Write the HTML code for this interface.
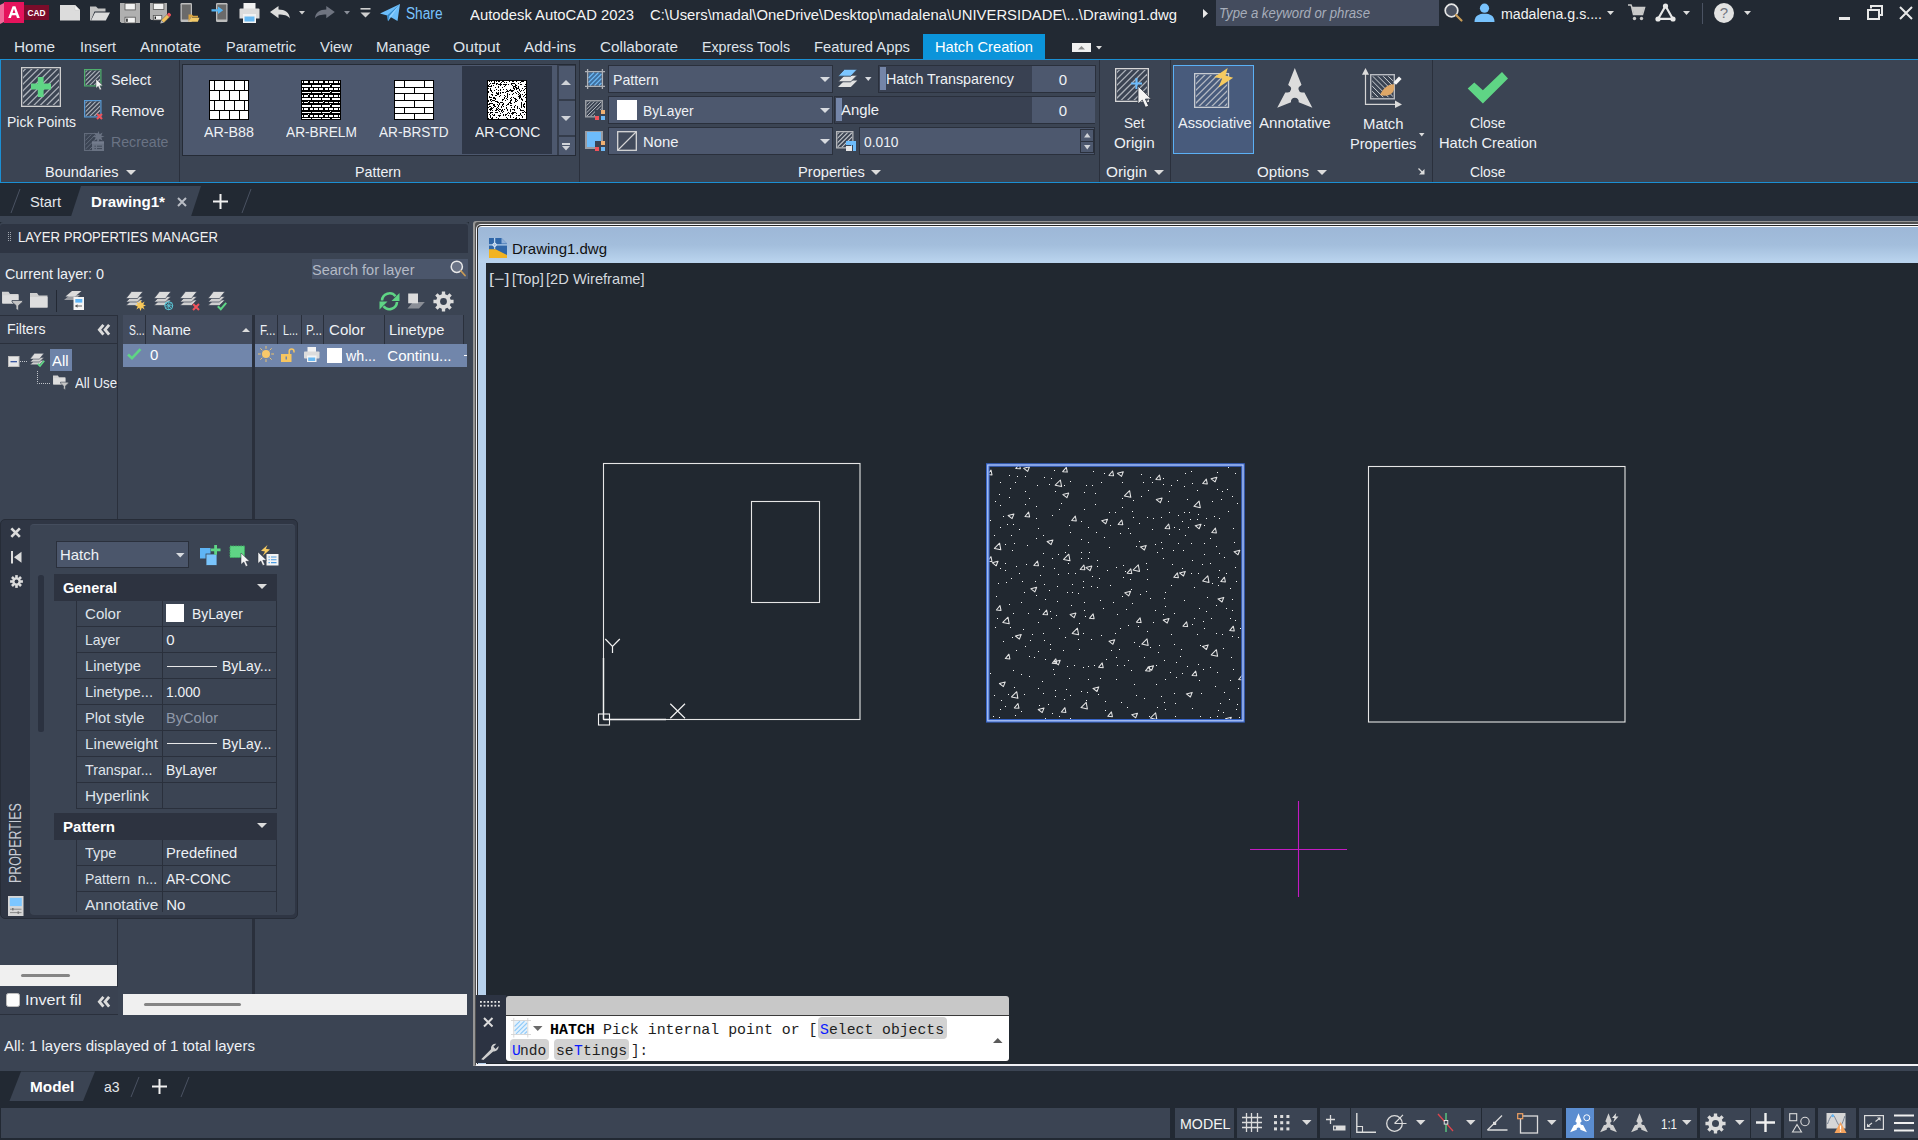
<!DOCTYPE html>
<html><head><meta charset="utf-8"><title>AutoCAD</title>
<style>
*{box-sizing:border-box;margin:0;padding:0}
html,body{width:1918px;height:1140px;overflow:hidden;background:#222933}
body{font-family:"Liberation Sans",sans-serif;font-size:15px;color:#f0f0f0;position:relative}
.a{position:absolute}
.t{position:absolute;white-space:pre;color:#f2f2f2}
svg{position:absolute;overflow:visible}
</style></head><body>
<!-- s_title -->
<svg style="left:0px;top:1px;" width="50" height="23" viewBox="0 0 50 23">
<path d="M0 4L4 2V21L0 23Z" fill="#f06a9a"/>
<rect x="4" y="1" width="20" height="21" fill="#e5135c"/>
<rect x="24" y="4" width="25" height="15" fill="#7a0c2a"/>
<path d="M8.2 17L12.6 5.2H15.4L19.8 17H17L16.1 14.3H11.8L10.9 17ZM12.5 12.1H15.4L14 7.7Z" fill="#fff"/>
<text x="27.5" y="15.2" font-family="Liberation Sans" font-weight="bold" font-size="9.5" fill="#fff" textLength="18" lengthAdjust="spacingAndGlyphs">CAD</text>
</svg>
<svg style="left:60px;top:5px;" width="20" height="16" viewBox="0 0 20 16"><path d="M0 0H15L20 5V15.5H0Z" fill="#dcdcdc"/><path d="M15 0.3V5H19.7Z" fill="#f8f8f8" stroke="#c4c4c4" stroke-width="0.5"/></svg>
<svg style="left:90px;top:5px;" width="20" height="16" viewBox="0 0 20 16"><path d="M0 15.5V1.5H6L8 3.5H15.5V6.5H4.5L0.8 15.5Z" fill="#c4c4c4"/><path d="M5 7.5H20L15.8 15.5H1Z" fill="#dcdcdc"/></svg>
<svg style="left:120px;top:3px;" width="20" height="20" viewBox="0 0 20 20"><path d="M0 0H20V20H1.5L0 18.5Z" fill="#b0b0b0"/><rect x="5" y="0.3" width="10.3" height="6.6" fill="#f2f2f2" stroke="#555" stroke-width="0.8"/><rect x="5" y="14.2" width="10.3" height="5.8" fill="#f2f2f2" stroke="#555" stroke-width="0.8"/><rect x="6.2" y="15.6" width="1.5" height="3.2" fill="#1a1a1a"/></svg>
<svg style="left:150px;top:3px;" width="21" height="21" viewBox="0 0 21 21"><path d="M0 0H17V17H1.3L0 15.7Z" fill="#b0b0b0"/><rect x="3.3" y="0.3" width="10.6" height="6.2" fill="#f2f2f2" stroke="#555" stroke-width="0.8"/><rect x="3.3" y="12.4" width="8.5" height="4.6" fill="#f2f2f2" stroke="#555" stroke-width="0.8"/><rect x="4.6" y="13.5" width="1.4" height="2.4" fill="#1a1a1a"/><path d="M11.2 17.2L17 11.4L19.6 14L13.8 19.8Z" fill="#f2c25c" stroke="#5a5a5a" stroke-width="0.5"/><path d="M17 11.4L18.3 10.1Q19.2 9.5 20 10.4L20.7 11.1Q21.4 12 20.7 12.8L19.6 14Z" fill="#f0525a"/><path d="M11.2 17.2L10.2 20.6L13.8 19.8Z" fill="#b8b8b8"/></svg>
<svg style="left:180px;top:3px;" width="20" height="20" viewBox="0 0 20 20"><rect x="0.5" y="0" width="11.5" height="19" rx="1.2" fill="#bdbdbd"/><rect x="1.8" y="1.5" width="9" height="15" fill="#6a6a6a"/><path d="M8.5 18.5V11.5H12L13 12.8H18V14.5H10.5L8.9 18.5Z" fill="#d9a441"/><path d="M10.8 14.8H19.5L17.8 18.8H9.2Z" fill="#f2c968"/></svg>
<svg style="left:211px;top:3px;" width="17" height="20" viewBox="0 0 17 20"><rect x="5" y="0" width="11.5" height="19" rx="1.2" fill="#bdbdbd"/><rect x="6.3" y="1.5" width="9" height="15" fill="#6a6a6a"/><path d="M0.5 6.2H7V3.5L12.2 7.3L7 11.1V8.4H0.5Z" fill="#55b4f2"/></svg>
<svg style="left:239px;top:3px;" width="22" height="20" viewBox="0 0 22 20"><rect x="4.5" y="0" width="12" height="6" fill="#f2f2f2"/><path d="M0.5 6.5Q0.5 5.5 1.5 5.5H19.5Q20.5 5.5 20.5 6.5V15.5H0.5Z" fill="#dcdcdc"/><rect x="4" y="11" width="13" height="9" fill="#f2f2f2"/><rect x="5.5" y="13.5" width="10" height="5" fill="#69b9f2"/></svg>
<svg style="left:270px;top:6px;" width="20" height="14" viewBox="0 0 20 14"><path d="M0 6L8.5 0V3.6C15 3.6 19.5 6.5 19.8 12.5C17.5 9.5 14 8.6 8.5 8.6V12.2Z" fill="#dcdcdc"/></svg>
<svg style="left:299px;top:11.25px;" width="6" height="3.5" viewBox="0 0 6 3.5"><path d="M0 0H6L3 3.5Z" fill="#cfcfcf"/></svg>
<svg style="left:315px;top:6px;" width="20" height="14" viewBox="0 0 20 14"><path d="M19.8 6L11.3 0V3.6C4.8 3.6 0.3 6.5 0 12.5C2.3 9.5 5.8 8.6 11.3 8.6V12.2Z" fill="#6f7480"/></svg>
<svg style="left:344px;top:11.25px;" width="6" height="3.5" viewBox="0 0 6 3.5"><path d="M0 0H6L3 3.5Z" fill="#8a8f99"/></svg>
<svg style="left:359.5px;top:8px;" width="11" height="10" viewBox="0 0 11 10"><rect x="0.5" y="0" width="10" height="1.6" fill="#cfcfcf"/><path d="M0.5 4.5H10.5L5.5 9.5Z" fill="#cfcfcf"/></svg>
<svg style="left:380px;top:3.5px;" width="20" height="18" viewBox="0 0 20 18"><path d="M0 9.5L20 0L17.5 17L11 13.2L8 17.3L7.2 11.5Z" fill="#6cbdfa"/><path d="M7.2 11.5L20 0L9.2 12.3L8 17.3Z" fill="#2f86c9"/><path d="M9.2 12.3L20 0L11 13.2Z" fill="#8fd0ff"/></svg>
<div class="t" style="left:406.0px;top:3.0px;font-size:16px;line-height:21px;height:21px;color:#79c4ff;transform:scaleX(0.8549);transform-origin:0 0;">Share</div>
<div class="t" style="left:470.0px;top:4.1px;font-size:15.5px;line-height:21px;height:21px;color:#f5f5f5;transform:scaleX(0.9564);transform-origin:0 0;">Autodesk AutoCAD 2023</div>
<div class="t" style="left:650.0px;top:4.1px;font-size:15.5px;line-height:21px;height:21px;color:#f5f5f5;transform:scaleX(0.9574);transform-origin:0 0;">C:\Users\madal\OneDrive\Desktop\madalena\UNIVERSIDADE\...\Drawing1.dwg</div>
<svg style="left:1203px;top:8.5px;" width="5.5" height="9.5" viewBox="0 0 5.5 9.5"><path d="M0 0L5 4.5L0 9Z" fill="#e8e8e8"/></svg>
<div class="a" style="left:1216px;top:0px;width:223px;height:26px;background:#444c5e;"></div>
<div class="t" style="left:1219.0px;top:3.6px;font-size:14px;line-height:19px;height:19px;color:#a7aebb;font-style:italic;transform:scaleX(0.9390);transform-origin:0 0;">Type a keyword or phrase</div>
<svg style="left:1444px;top:3px;" width="19" height="19" viewBox="0 0 19 19"><circle cx="7.5" cy="7.5" r="6.3" fill="#4a5160" stroke="#e6e6e6" stroke-width="1.7"/><path d="M12 12L17.5 17.5" stroke="#c79a55" stroke-width="2.2" stroke-linecap="round"/></svg>
<svg style="left:1474px;top:3px;" width="21" height="19" viewBox="0 0 21 19"><circle cx="10.5" cy="5.2" r="4.6" fill="#78c2fc"/><path d="M0.5 19C0.5 12.5 5 10.8 10.5 10.8S20.5 12.5 20.5 19Z" fill="#78c2fc"/></svg>
<div class="t" style="left:1501.0px;top:3.1px;font-size:15.5px;line-height:21px;height:21px;color:#f2f2f2;transform:scaleX(0.9158);transform-origin:0 0;">madalena.g.s....</div>
<svg style="left:1606.5px;top:11px;" width="7" height="4" viewBox="0 0 7 4"><path d="M0 0H7L3.5 4Z" fill="#dcdcdc"/></svg>
<svg style="left:1628px;top:4px;" width="17" height="17" viewBox="0 0 17 17"><path d="M0 1H3L4 3.5H16.5L14.5 10.5H5.5L3.8 3.2" fill="none" stroke="#c9c9c9" stroke-width="1.6"/><path d="M4.3 4H16L14.2 10H5.8Z" fill="#c9c9c9"/><circle cx="6.5" cy="14.5" r="1.7" fill="#c9c9c9"/><circle cx="13.5" cy="14.5" r="1.7" fill="#c9c9c9"/></svg>
<svg style="left:1655px;top:3px;" width="21" height="19" viewBox="0 0 21 19"><path d="M10.5 3L3.2 15.8H17.8Z" fill="none" stroke="#e8e8e8" stroke-width="2.2" stroke-linejoin="round"/><circle cx="10.5" cy="3" r="2.6" fill="#e8e8e8"/><circle cx="3" cy="16" r="2.6" fill="#e8e8e8"/><circle cx="18" cy="16" r="2.6" fill="#e8e8e8"/></svg>
<svg style="left:1682.5px;top:11px;" width="7" height="4" viewBox="0 0 7 4"><path d="M0 0H7L3.5 4Z" fill="#dcdcdc"/></svg>
<div class="a" style="left:1702px;top:3px;width:1px;height:21px;background:#4a5262;"></div>
<svg style="left:1714px;top:3px;" width="20" height="20" viewBox="0 0 20 20"><circle cx="10" cy="10" r="10" fill="#e2e2e2"/><text x="10" y="15.3" text-anchor="middle" font-family="Liberation Sans" font-size="15" fill="#70757e">?</text></svg>
<svg style="left:1743.5px;top:11px;" width="7" height="4" viewBox="0 0 7 4"><path d="M0 0H7L3.5 4Z" fill="#dcdcdc"/></svg>
<div class="a" style="left:1839px;top:17px;width:11px;height:2.5px;background:#e8e8e8;"></div>
<svg style="left:1867px;top:5px;" width="16" height="15" viewBox="0 0 16 15"><path d="M4 3.5V1H15V10H12.5" fill="none" stroke="#e8e8e8" stroke-width="2"/><rect x="1" y="5" width="11" height="9" fill="none" stroke="#e8e8e8" stroke-width="2"/></svg>
<svg style="left:1899px;top:6px;" width="14" height="14" viewBox="0 0 14 14"><path d="M1 1L13 13M13 1L1 13" stroke="#e8e8e8" stroke-width="2"/></svg>
<div class="t" style="left:14.0px;top:36.8px;font-size:15px;line-height:20px;height:20px;color:#dfe3ea;transform:scaleX(1.0247);transform-origin:0 0;">Home</div>
<div class="t" style="left:80.0px;top:36.8px;font-size:15px;line-height:20px;height:20px;color:#dfe3ea;transform:scaleX(0.9596);transform-origin:0 0;">Insert</div>
<div class="t" style="left:140.0px;top:36.8px;font-size:15px;line-height:20px;height:20px;color:#dfe3ea;transform:scaleX(1.0158);transform-origin:0 0;">Annotate</div>
<div class="t" style="left:226.0px;top:36.8px;font-size:15px;line-height:20px;height:20px;color:#dfe3ea;transform:scaleX(0.9653);transform-origin:0 0;">Parametric</div>
<div class="t" style="left:320.0px;top:36.8px;font-size:15px;line-height:20px;height:20px;color:#dfe3ea;transform:scaleX(0.9925);transform-origin:0 0;">View</div>
<div class="t" style="left:376.0px;top:36.8px;font-size:15px;line-height:20px;height:20px;color:#dfe3ea;">Manage</div>
<div class="t" style="left:453.0px;top:36.8px;font-size:15px;line-height:20px;height:20px;color:#dfe3ea;transform:scaleX(1.0438);transform-origin:0 0;">Output</div>
<div class="t" style="left:524.0px;top:36.8px;font-size:15px;line-height:20px;height:20px;color:#dfe3ea;transform:scaleX(1.0224);transform-origin:0 0;">Add-ins</div>
<div class="t" style="left:600.0px;top:36.8px;font-size:15px;line-height:20px;height:20px;color:#dfe3ea;transform:scaleX(1.0168);transform-origin:0 0;">Collaborate</div>
<div class="t" style="left:702.0px;top:36.8px;font-size:15px;line-height:20px;height:20px;color:#dfe3ea;transform:scaleX(0.9452);transform-origin:0 0;">Express Tools</div>
<div class="t" style="left:814.0px;top:36.8px;font-size:15px;line-height:20px;height:20px;color:#dfe3ea;transform:scaleX(0.9840);transform-origin:0 0;">Featured Apps</div>
<div class="a" style="left:923px;top:34px;width:122px;height:27px;background:#0b94da;"></div>
<div class="t" style="left:935.0px;top:36.8px;font-size:15px;line-height:20px;height:20px;color:#ffffff;transform:scaleX(0.9795);transform-origin:0 0;">Hatch Creation</div>
<div class="a" style="left:1072px;top:43px;width:19px;height:9px;background:#f0f0f0;"></div>
<svg style="left:1078px;top:45.75px;" width="7" height="3.5" viewBox="0 0 7 3.5"><path d="M0 3.5H7L3.5 0Z" fill="#8a8a8a"/></svg>
<svg style="left:1095.5px;top:45.75px;" width="6" height="3.5" viewBox="0 0 6 3.5"><path d="M0 0H6L3 3.5Z" fill="#dcdcdc"/></svg>
<!-- s_ribbon -->
<div class="a" style="left:0px;top:58.8px;width:1918px;height:124.7px;background:#3b4453;border-top:1.5px solid #1b8fd3;border-bottom:1.9px solid #1b8fd3;border-left:1.5px solid #1b8fd3"></div>
<svg style="left:21px;top:67px;" width="40" height="40" viewBox="0 0 40 40"><clipPath id="hc1"><rect x="2" y="2" width="36" height="36"/></clipPath><g clip-path="url(#hc1)" stroke="#aeb3bb" stroke-width="1.25"><path d="M-40 40L0 0"/><path d="M-33.6 40L6.4 0"/><path d="M-27.2 40L12.8 0"/><path d="M-20.8 40L19.2 0"/><path d="M-14.4 40L25.6 0"/><path d="M-8 40L32 0"/><path d="M-1.6 40L38.4 0"/><path d="M4.8 40L44.8 0"/><path d="M11.2 40L51.2 0"/><path d="M17.6 40L57.6 0"/><path d="M24 40L64 0"/><path d="M30.4 40L70.4 0"/><path d="M36.8 40L76.8 0"/><path d="M43.2 40L83.2 0"/><path d="M49.6 40L89.6 0"/><path d="M56 40L96 0"/><path d="M62.4 40L102.4 0"/><path d="M68.8 40L108.8 0"/><path d="M75.2 40L115.2 0"/></g><rect x="0.65" y="0.65" width="38.7" height="38.7" fill="none" stroke="#cfcfcf" stroke-width="1.3"/></svg>
<svg style="left:31px;top:77px;" width="20" height="20" viewBox="0 0 20 20"><path d="M6.8 0H12.6V6.6H20V12.6H12.6V20H6.8V12.6H0V6.6H6.8Z" fill="#5fd585"/></svg>
<div class="t" style="left:6.6px;top:111.8px;font-size:15px;line-height:20px;height:20px;color:#eef1f5;transform:scaleX(0.9300);transform-origin:0 0;">Pick Points</div>
<svg style="left:84px;top:69px;" width="17.5" height="17.5" viewBox="0 0 17.5 17.5"><clipPath id="hc2"><rect x="1.5" y="1.5" width="14.5" height="14.5"/></clipPath><g clip-path="url(#hc2)" stroke="#aeb3bb" stroke-width="1.1"><path d="M-17.5 17.5L0 0"/><path d="M-13.1 17.5L4.4 0"/><path d="M-8.7 17.5L8.8 0"/><path d="M-4.3 17.5L13.2 0"/><path d="M0.1 17.5L17.6 0"/><path d="M4.5 17.5L22 0"/><path d="M8.9 17.5L26.4 0"/><path d="M13.3 17.5L30.8 0"/><path d="M17.7 17.5L35.2 0"/><path d="M22.1 17.5L39.6 0"/><path d="M26.5 17.5L44 0"/><path d="M30.9 17.5L48.4 0"/></g><rect x="0.6" y="0.6" width="16.3" height="16.3" fill="none" stroke="#4fae6c" stroke-width="1.2"/></svg>
<svg style="left:95.5px;top:78.5px;" width="7.2" height="11.3" viewBox="0 0 10.5 16.5"><path d="M0 0V13.5L3.2 10.6L5.6 16L8 15L5.6 9.8H10Z" fill="#f4f4f4" stroke="#2a303c" stroke-width="0.6"/></svg>
<div class="t" style="left:111.3px;top:69.8px;font-size:15px;line-height:20px;height:20px;color:#eef1f5;transform:scaleX(0.9595);transform-origin:0 0;">Select</div>
<svg style="left:84px;top:100px;" width="17.5" height="17.5" viewBox="0 0 17.5 17.5"><clipPath id="hc3"><rect x="1.5" y="1.5" width="14.5" height="14.5"/></clipPath><g clip-path="url(#hc3)" stroke="#aeb3bb" stroke-width="1.1"><path d="M-17.5 17.5L0 0"/><path d="M-13.1 17.5L4.4 0"/><path d="M-8.7 17.5L8.8 0"/><path d="M-4.3 17.5L13.2 0"/><path d="M0.1 17.5L17.6 0"/><path d="M4.5 17.5L22 0"/><path d="M8.9 17.5L26.4 0"/><path d="M13.3 17.5L30.8 0"/><path d="M17.7 17.5L35.2 0"/><path d="M22.1 17.5L39.6 0"/><path d="M26.5 17.5L44 0"/><path d="M30.9 17.5L48.4 0"/></g><rect x="0.6" y="0.6" width="16.3" height="16.3" fill="none" stroke="#5a9bd5" stroke-width="1.2"/></svg>
<svg style="left:96px;top:112.5px;" width="7" height="7" viewBox="0 0 7 7"><path d="M1 1L6 6M6 1L1 6" stroke="#f0525a" stroke-width="2"/></svg>
<div class="t" style="left:111.3px;top:100.8px;font-size:15px;line-height:20px;height:20px;color:#eef1f5;transform:scaleX(0.9578);transform-origin:0 0;">Remove</div>
<svg style="left:84px;top:133px;" width="14" height="18" viewBox="0 0 14 18"><clipPath id="hc4"><rect x="1.5" y="1.5" width="11" height="15"/></clipPath><g clip-path="url(#hc4)" stroke="#626b7b" stroke-width="1"><path d="M-18 18L0 0"/><path d="M-13.6 18L4.4 0"/><path d="M-9.2 18L8.8 0"/><path d="M-4.8 18L13.2 0"/><path d="M-0.4 18L17.6 0"/><path d="M4 18L22 0"/><path d="M8.4 18L26.4 0"/><path d="M12.8 18L30.8 0"/><path d="M17.2 18L35.2 0"/><path d="M21.6 18L39.6 0"/><path d="M26 18L44 0"/><path d="M30.4 18L48.4 0"/></g><rect x="0.55" y="0.55" width="12.9" height="16.9" fill="none" stroke="#626b7b" stroke-width="1.1"/></svg>
<svg style="left:92px;top:131px;" width="13" height="20" viewBox="0 0 13 20"><path d="M6.5 0L7.6 3.2L10.6 1.6L9.3 4.7L12.6 5.6L9.3 6.6L10.6 9.7L7.6 8.1L6.5 11.3L5.4 8.1L2.4 9.7L3.7 6.6L0.4 5.6L3.7 4.7L2.4 1.6L5.4 3.2Z" fill="#6a7383"/><rect x="0" y="10.5" width="12" height="9.5" fill="#6a7383"/><rect x="0" y="10.5" width="12" height="2.2" fill="#747d8d"/><path d="M2.5 15.2H3.8M5 15.2H10M2.5 17.6H3.8M5 17.6H10" stroke="#3b4453" stroke-width="0.9"/></svg>
<div class="t" style="left:111.3px;top:131.8px;font-size:15px;line-height:20px;height:20px;color:#6a7384;transform:scaleX(0.9447);transform-origin:0 0;">Recreate</div>
<div class="t" style="left:44.7px;top:161.8px;font-size:15px;line-height:20px;height:20px;color:#eef1f5;transform:scaleX(0.9686);transform-origin:0 0;">Boundaries</div>
<svg style="left:126px;top:169.9px;" width="10" height="5" viewBox="0 0 10 5"><path d="M0 0H10L5 5Z" fill="#dcdcdc"/></svg>
<div class="a" style="left:179px;top:60px;width:1px;height:122px;background:#2a303c;"></div>
<div class="a" style="left:182px;top:64px;width:394px;height:92px;background:#4d586e;border:1px solid #252b36"></div>
<div class="a" style="left:462px;top:66px;width:90px;height:88px;background:#2f3747;"></div>
<div class="a" style="left:557px;top:65px;width:1px;height:90px;background:#3b4453;"></div>
<div class="a" style="left:557px;top:65px;width:18px;height:90px;background:#343c4b;"></div>
<div class="a" style="left:558.5px;top:65.5px;width:16px;height:33.5px;background:#4d586e;"></div>
<div class="a" style="left:558.5px;top:101px;width:16px;height:34px;background:#4d586e;"></div>
<div class="a" style="left:558.5px;top:137px;width:16px;height:18px;background:#4d586e;"></div>
<svg style="left:561px;top:80.3px;" width="10" height="5" viewBox="0 0 10 5"><path d="M0 5H10L5 0Z" fill="#d0d3d8"/></svg>
<svg style="left:561px;top:115.5px;" width="10" height="5" viewBox="0 0 10 5"><path d="M0 0H10L5 5Z" fill="#d0d3d8"/></svg>
<div class="a" style="left:562px;top:143.3px;width:8px;height:1.4px;background:#d0d3d8;"></div>
<svg style="left:562px;top:146.05px;" width="8" height="4.5" viewBox="0 0 8 4.5"><path d="M0 0H8L4 4.5Z" fill="#d0d3d8"/></svg>
<svg style="left:209px;top:80px;shape-rendering:crispEdges;" width="40" height="40" viewBox="0 0 40 40"><rect x="0" y="0" width="40" height="40" fill="#000"/><rect x="1" y="1" width="38" height="38" fill="#fff"/><rect x="0" y="10" width="40" height="1" fill="#000"/><rect x="0" y="20" width="40" height="1" fill="#000"/><rect x="0" y="30" width="40" height="1" fill="#000"/><rect x="5" y="0" width="1" height="10" fill="#000"/><rect x="15" y="0" width="1" height="10" fill="#000"/><rect x="25" y="0" width="1" height="10" fill="#000"/><rect x="35" y="0" width="1" height="10" fill="#000"/><rect x="10" y="10" width="1" height="10" fill="#000"/><rect x="20" y="10" width="1" height="10" fill="#000"/><rect x="30" y="10" width="1" height="10" fill="#000"/><rect x="5" y="20" width="1" height="10" fill="#000"/><rect x="15" y="20" width="1" height="10" fill="#000"/><rect x="25" y="20" width="1" height="10" fill="#000"/><rect x="35" y="20" width="1" height="10" fill="#000"/><rect x="10" y="30" width="1" height="10" fill="#000"/><rect x="20" y="30" width="1" height="10" fill="#000"/><rect x="30" y="30" width="1" height="10" fill="#000"/></svg>
<div class="t" style="left:204.3px;top:121.8px;font-size:15px;line-height:20px;height:20px;color:#eef1f5;transform:scaleX(0.9520);transform-origin:0 0;">AR-B88</div>
<svg style="left:301px;top:80px;shape-rendering:crispEdges;" width="40" height="40" viewBox="0 0 40 40"><rect x="0" y="0" width="40" height="40" fill="#000"/><rect x="1" y="1" width="1" height="2" fill="#fff"/><rect x="3" y="1" width="4" height="2" fill="#fff"/><rect x="9" y="1" width="3" height="2" fill="#fff"/><rect x="13" y="1" width="4" height="2" fill="#fff"/><rect x="18" y="1" width="4" height="2" fill="#fff"/><rect x="24" y="1" width="3" height="2" fill="#fff"/><rect x="28" y="1" width="4" height="2" fill="#fff"/><rect x="33" y="1" width="4" height="2" fill="#fff"/><rect x="38" y="1" width="1" height="2" fill="#fff"/><rect x="1" y="5" width="9" height="2" fill="#fff"/><rect x="11" y="5" width="9" height="2" fill="#fff"/><rect x="21" y="5" width="8" height="2" fill="#fff"/><rect x="31" y="5" width="8" height="2" fill="#fff"/><rect x="1" y="8" width="1" height="2" fill="#fff"/><rect x="3" y="8" width="4" height="2" fill="#fff"/><rect x="9" y="8" width="3" height="2" fill="#fff"/><rect x="13" y="8" width="4" height="2" fill="#fff"/><rect x="18" y="8" width="4" height="2" fill="#fff"/><rect x="24" y="8" width="3" height="2" fill="#fff"/><rect x="28" y="8" width="4" height="2" fill="#fff"/><rect x="33" y="8" width="4" height="2" fill="#fff"/><rect x="38" y="8" width="1" height="2" fill="#fff"/><rect x="1" y="12" width="9" height="1" fill="#fff"/><rect x="11" y="12" width="9" height="1" fill="#fff"/><rect x="21" y="12" width="8" height="1" fill="#fff"/><rect x="31" y="12" width="8" height="1" fill="#fff"/><rect x="1" y="15" width="1" height="2" fill="#fff"/><rect x="3" y="15" width="4" height="2" fill="#fff"/><rect x="9" y="15" width="3" height="2" fill="#fff"/><rect x="13" y="15" width="4" height="2" fill="#fff"/><rect x="18" y="15" width="4" height="2" fill="#fff"/><rect x="24" y="15" width="3" height="2" fill="#fff"/><rect x="28" y="15" width="4" height="2" fill="#fff"/><rect x="33" y="15" width="4" height="2" fill="#fff"/><rect x="38" y="15" width="1" height="2" fill="#fff"/><rect x="1" y="18" width="9" height="2" fill="#fff"/><rect x="11" y="18" width="9" height="2" fill="#fff"/><rect x="21" y="18" width="8" height="2" fill="#fff"/><rect x="31" y="18" width="8" height="2" fill="#fff"/><rect x="1" y="22" width="1" height="1" fill="#fff"/><rect x="3" y="22" width="4" height="1" fill="#fff"/><rect x="9" y="22" width="3" height="1" fill="#fff"/><rect x="13" y="22" width="4" height="1" fill="#fff"/><rect x="18" y="22" width="4" height="1" fill="#fff"/><rect x="24" y="22" width="3" height="1" fill="#fff"/><rect x="28" y="22" width="4" height="1" fill="#fff"/><rect x="33" y="22" width="4" height="1" fill="#fff"/><rect x="38" y="22" width="1" height="1" fill="#fff"/><rect x="1" y="25" width="9" height="2" fill="#fff"/><rect x="11" y="25" width="9" height="2" fill="#fff"/><rect x="21" y="25" width="8" height="2" fill="#fff"/><rect x="31" y="25" width="8" height="2" fill="#fff"/><rect x="1" y="28" width="1" height="2" fill="#fff"/><rect x="3" y="28" width="4" height="2" fill="#fff"/><rect x="9" y="28" width="3" height="2" fill="#fff"/><rect x="13" y="28" width="4" height="2" fill="#fff"/><rect x="18" y="28" width="4" height="2" fill="#fff"/><rect x="24" y="28" width="3" height="2" fill="#fff"/><rect x="28" y="28" width="4" height="2" fill="#fff"/><rect x="33" y="28" width="4" height="2" fill="#fff"/><rect x="38" y="28" width="1" height="2" fill="#fff"/><rect x="1" y="32" width="9" height="1" fill="#fff"/><rect x="11" y="32" width="9" height="1" fill="#fff"/><rect x="21" y="32" width="8" height="1" fill="#fff"/><rect x="31" y="32" width="8" height="1" fill="#fff"/><rect x="1" y="35" width="1" height="2" fill="#fff"/><rect x="3" y="35" width="4" height="2" fill="#fff"/><rect x="9" y="35" width="3" height="2" fill="#fff"/><rect x="13" y="35" width="4" height="2" fill="#fff"/><rect x="18" y="35" width="4" height="2" fill="#fff"/><rect x="24" y="35" width="3" height="2" fill="#fff"/><rect x="28" y="35" width="4" height="2" fill="#fff"/><rect x="33" y="35" width="4" height="2" fill="#fff"/><rect x="38" y="35" width="1" height="2" fill="#fff"/><rect x="1" y="38" width="9" height="1" fill="#fff"/><rect x="11" y="38" width="9" height="1" fill="#fff"/><rect x="21" y="38" width="8" height="1" fill="#fff"/><rect x="31" y="38" width="8" height="1" fill="#fff"/><rect x="29" y="4" width="1" height="1" fill="#fff"/><rect x="29" y="11" width="1" height="1" fill="#fff"/><rect x="7" y="14" width="1" height="1" fill="#fff"/><rect x="22" y="14" width="1" height="1" fill="#fff"/><rect x="7" y="21" width="1" height="1" fill="#fff"/><rect x="22" y="21" width="1" height="1" fill="#fff"/><rect x="29" y="24" width="1" height="1" fill="#fff"/><rect x="29" y="31" width="1" height="1" fill="#fff"/><rect x="7" y="34" width="1" height="1" fill="#fff"/><rect x="22" y="34" width="1" height="1" fill="#fff"/></svg>
<div class="t" style="left:286.0px;top:121.8px;font-size:15px;line-height:20px;height:20px;color:#eef1f5;transform:scaleX(0.9134);transform-origin:0 0;">AR-BRELM</div>
<svg style="left:394px;top:80px;shape-rendering:crispEdges;" width="40" height="40" viewBox="0 0 40 40"><rect x="0" y="0" width="40" height="40" fill="#000"/><rect x="1" y="1" width="38" height="38" fill="#fff"/><rect x="0" y="7" width="40" height="1" fill="#000"/><rect x="0" y="13" width="40" height="1" fill="#000"/><rect x="0" y="20" width="40" height="1" fill="#000"/><rect x="0" y="27" width="40" height="1" fill="#000"/><rect x="0" y="33" width="40" height="1" fill="#000"/><rect x="10" y="0" width="1" height="7" fill="#000"/><rect x="30" y="0" width="1" height="7" fill="#000"/><rect x="20" y="7" width="1" height="6" fill="#000"/><rect x="10" y="13" width="1" height="7" fill="#000"/><rect x="30" y="13" width="1" height="7" fill="#000"/><rect x="20" y="20" width="1" height="7" fill="#000"/><rect x="10" y="27" width="1" height="6" fill="#000"/><rect x="30" y="27" width="1" height="6" fill="#000"/><rect x="20" y="33" width="1" height="7" fill="#000"/></svg>
<div class="t" style="left:379.2px;top:121.8px;font-size:15px;line-height:20px;height:20px;color:#eef1f5;transform:scaleX(0.9065);transform-origin:0 0;">AR-BRSTD</div>
<svg style="left:487px;top:80px;" width="40" height="40" viewBox="0 0 40 40"><rect x="0" y="0" width="40" height="40" fill="#000"/><rect x="1" y="1" width="38" height="38" fill="#fff"/><path d="M2 1h1v1h-1zM4 1h1v1h-1zM7 1h1v1h-1zM9 1h1v1h-1zM11 1h1v1h-1zM12 1h1v1h-1zM15 1h1v1h-1zM16 1h1v1h-1zM22 1h1v1h-1zM25 1h1v1h-1zM26 1h1v1h-1zM29 1h1v1h-1zM34 1h1v1h-1zM35 1h1v1h-1zM36 1h1v1h-1zM7 2h1v1h-1zM14 2h1v1h-1zM17 2h1v1h-1zM19 2h1v1h-1zM33 2h1v1h-1zM3 3h1v1h-1zM5 3h1v1h-1zM6 3h1v1h-1zM7 3h1v1h-1zM9 3h1v1h-1zM10 3h1v1h-1zM13 3h1v1h-1zM24 3h1v1h-1zM25 3h1v1h-1zM26 3h1v1h-1zM27 3h1v1h-1zM31 3h1v1h-1zM2 4h1v1h-1zM9 4h1v1h-1zM11 4h1v1h-1zM12 4h1v1h-1zM13 4h1v1h-1zM14 4h1v1h-1zM16 4h1v1h-1zM17 4h1v1h-1zM18 4h1v1h-1zM19 4h1v1h-1zM21 4h1v1h-1zM24 4h1v1h-1zM28 4h1v1h-1zM33 4h1v1h-1zM34 4h1v1h-1zM38 4h1v1h-1zM1 5h1v1h-1zM4 5h1v1h-1zM6 5h1v1h-1zM13 5h1v1h-1zM18 5h1v1h-1zM25 5h1v1h-1zM28 5h1v1h-1zM29 5h1v1h-1zM1 6h1v1h-1zM2 6h1v1h-1zM3 6h1v1h-1zM4 6h1v1h-1zM11 6h1v1h-1zM17 6h1v1h-1zM26 6h1v1h-1zM27 6h1v1h-1zM28 6h1v1h-1zM31 6h1v1h-1zM37 6h1v1h-1zM38 6h1v1h-1zM8 7h1v1h-1zM11 7h1v1h-1zM15 7h1v1h-1zM26 7h1v1h-1zM28 7h1v1h-1zM29 7h1v1h-1zM31 7h1v1h-1zM1 8h1v1h-1zM3 8h1v1h-1zM26 8h1v1h-1zM27 8h1v1h-1zM29 8h1v1h-1zM30 8h1v1h-1zM31 8h1v1h-1zM35 8h1v1h-1zM38 8h1v1h-1zM3 9h1v1h-1zM9 9h1v1h-1zM13 9h1v1h-1zM16 9h1v1h-1zM19 9h1v1h-1zM23 9h1v1h-1zM27 9h1v1h-1zM29 9h1v1h-1zM32 9h1v1h-1zM37 9h1v1h-1zM3 10h1v1h-1zM4 10h1v1h-1zM7 10h1v1h-1zM11 10h1v1h-1zM13 10h1v1h-1zM20 10h1v1h-1zM22 10h1v1h-1zM23 10h1v1h-1zM24 10h1v1h-1zM25 10h1v1h-1zM26 10h1v1h-1zM32 10h1v1h-1zM34 10h1v1h-1zM36 10h1v1h-1zM1 11h1v1h-1zM4 11h1v1h-1zM19 11h1v1h-1zM20 11h1v1h-1zM21 11h1v1h-1zM24 11h1v1h-1zM25 11h1v1h-1zM30 11h1v1h-1zM33 11h1v1h-1zM1 12h1v1h-1zM5 12h1v1h-1zM9 12h1v1h-1zM11 12h1v1h-1zM13 12h1v1h-1zM15 12h1v1h-1zM16 12h1v1h-1zM18 12h1v1h-1zM28 12h1v1h-1zM31 12h1v1h-1zM37 12h1v1h-1zM9 13h1v1h-1zM10 13h1v1h-1zM11 13h1v1h-1zM13 13h1v1h-1zM20 13h1v1h-1zM26 13h1v1h-1zM29 13h1v1h-1zM32 13h1v1h-1zM4 14h1v1h-1zM5 14h1v1h-1zM10 14h1v1h-1zM11 14h1v1h-1zM20 14h1v1h-1zM22 14h1v1h-1zM25 14h1v1h-1zM31 14h1v1h-1zM33 14h1v1h-1zM35 14h1v1h-1zM38 14h1v1h-1zM5 15h1v1h-1zM8 15h1v1h-1zM9 15h1v1h-1zM13 15h1v1h-1zM17 15h1v1h-1zM20 15h1v1h-1zM32 15h1v1h-1zM33 15h1v1h-1zM37 15h1v1h-1zM2 16h1v1h-1zM12 16h1v1h-1zM18 16h1v1h-1zM20 16h1v1h-1zM31 16h1v1h-1zM32 16h1v1h-1zM33 16h1v1h-1zM36 16h1v1h-1zM2 17h1v1h-1zM3 17h1v1h-1zM4 17h1v1h-1zM6 17h1v1h-1zM7 17h1v1h-1zM17 17h1v1h-1zM20 17h1v1h-1zM24 17h1v1h-1zM26 17h1v1h-1zM32 17h1v1h-1zM33 17h1v1h-1zM38 17h1v1h-1zM6 18h1v1h-1zM7 18h1v1h-1zM8 18h1v1h-1zM17 18h1v1h-1zM19 18h1v1h-1zM23 18h1v1h-1zM27 18h1v1h-1zM28 18h1v1h-1zM32 18h1v1h-1zM34 18h1v1h-1zM3 19h1v1h-1zM4 19h1v1h-1zM8 19h1v1h-1zM15 19h1v1h-1zM16 19h1v1h-1zM20 19h1v1h-1zM24 19h1v1h-1zM28 19h1v1h-1zM29 19h1v1h-1zM34 19h1v1h-1zM35 19h1v1h-1zM1 20h1v1h-1zM3 20h1v1h-1zM5 20h1v1h-1zM6 20h1v1h-1zM7 20h1v1h-1zM15 20h1v1h-1zM18 20h1v1h-1zM23 20h1v1h-1zM24 20h1v1h-1zM28 20h1v1h-1zM30 20h1v1h-1zM35 20h1v1h-1zM1 21h1v1h-1zM4 21h1v1h-1zM8 21h1v1h-1zM9 21h1v1h-1zM10 21h1v1h-1zM23 21h1v1h-1zM28 21h1v1h-1zM29 21h1v1h-1zM38 21h1v1h-1zM10 22h1v1h-1zM11 22h1v1h-1zM13 22h1v1h-1zM14 22h1v1h-1zM15 22h1v1h-1zM22 22h1v1h-1zM23 22h1v1h-1zM27 22h1v1h-1zM34 22h1v1h-1zM2 23h1v1h-1zM3 23h1v1h-1zM4 23h1v1h-1zM5 23h1v1h-1zM12 23h1v1h-1zM16 23h1v1h-1zM21 23h1v1h-1zM23 23h1v1h-1zM24 23h1v1h-1zM34 23h1v1h-1zM37 23h1v1h-1zM1 24h1v1h-1zM2 24h1v1h-1zM6 24h1v1h-1zM7 24h1v1h-1zM10 24h1v1h-1zM12 24h1v1h-1zM15 24h1v1h-1zM16 24h1v1h-1zM20 24h1v1h-1zM21 24h1v1h-1zM34 24h1v1h-1zM36 24h1v1h-1zM37 24h1v1h-1zM6 25h1v1h-1zM7 25h1v1h-1zM11 25h1v1h-1zM15 25h1v1h-1zM19 25h1v1h-1zM23 25h1v1h-1zM24 25h1v1h-1zM28 25h1v1h-1zM34 25h1v1h-1zM36 25h1v1h-1zM2 26h1v1h-1zM3 26h1v1h-1zM7 26h1v1h-1zM8 26h1v1h-1zM11 26h1v1h-1zM14 26h1v1h-1zM16 26h1v1h-1zM27 26h1v1h-1zM30 26h1v1h-1zM34 26h1v1h-1zM36 26h1v1h-1zM37 26h1v1h-1zM1 27h1v1h-1zM4 27h1v1h-1zM6 27h1v1h-1zM10 27h1v1h-1zM14 27h1v1h-1zM19 27h1v1h-1zM24 27h1v1h-1zM27 27h1v1h-1zM30 27h1v1h-1zM34 27h1v1h-1zM37 27h1v1h-1zM3 28h1v1h-1zM4 28h1v1h-1zM5 28h1v1h-1zM9 28h1v1h-1zM11 28h1v1h-1zM19 28h1v1h-1zM30 28h1v1h-1zM32 28h1v1h-1zM2 29h1v1h-1zM3 29h1v1h-1zM4 29h1v1h-1zM9 29h1v1h-1zM10 29h1v1h-1zM12 29h1v1h-1zM13 29h1v1h-1zM15 29h1v1h-1zM17 29h1v1h-1zM20 29h1v1h-1zM23 29h1v1h-1zM25 29h1v1h-1zM26 29h1v1h-1zM27 29h1v1h-1zM33 29h1v1h-1zM3 30h1v1h-1zM5 30h1v1h-1zM8 30h1v1h-1zM9 30h1v1h-1zM11 30h1v1h-1zM14 30h1v1h-1zM15 30h1v1h-1zM20 30h1v1h-1zM23 30h1v1h-1zM27 30h1v1h-1zM33 30h1v1h-1zM34 30h1v1h-1zM35 30h1v1h-1zM36 30h1v1h-1zM12 31h1v1h-1zM14 31h1v1h-1zM16 31h1v1h-1zM23 31h1v1h-1zM37 31h1v1h-1zM1 32h1v1h-1zM3 32h1v1h-1zM4 32h1v1h-1zM5 32h1v1h-1zM8 32h1v1h-1zM9 32h1v1h-1zM10 32h1v1h-1zM15 32h1v1h-1zM21 32h1v1h-1zM25 32h1v1h-1zM26 32h1v1h-1zM27 32h1v1h-1zM28 32h1v1h-1zM35 32h1v1h-1zM36 32h1v1h-1zM38 32h1v1h-1zM3 33h1v1h-1zM13 33h1v1h-1zM20 33h1v1h-1zM22 33h1v1h-1zM24 33h1v1h-1zM25 33h1v1h-1zM26 33h1v1h-1zM29 33h1v1h-1zM33 33h1v1h-1zM2 34h1v1h-1zM5 34h1v1h-1zM7 34h1v1h-1zM16 34h1v1h-1zM18 34h1v1h-1zM19 34h1v1h-1zM25 34h1v1h-1zM33 34h1v1h-1zM37 34h1v1h-1zM3 35h1v1h-1zM6 35h1v1h-1zM7 35h1v1h-1zM11 35h1v1h-1zM12 35h1v1h-1zM13 35h1v1h-1zM16 35h1v1h-1zM18 35h1v1h-1zM21 35h1v1h-1zM23 35h1v1h-1zM29 35h1v1h-1zM31 35h1v1h-1zM32 35h1v1h-1zM34 35h1v1h-1zM3 36h1v1h-1zM12 36h1v1h-1zM23 36h1v1h-1zM35 36h1v1h-1zM3 37h1v1h-1zM5 37h1v1h-1zM9 37h1v1h-1zM19 37h1v1h-1zM23 37h1v1h-1zM26 37h1v1h-1zM29 37h1v1h-1zM35 37h1v1h-1zM1 38h1v1h-1zM4 38h1v1h-1zM5 38h1v1h-1zM11 38h1v1h-1zM20 38h1v1h-1zM28 38h1v1h-1zM29 38h1v1h-1zM32 38h1v1h-1z" fill="#000"/></svg>
<div class="t" style="left:475.1px;top:121.8px;font-size:15px;line-height:20px;height:20px;color:#eef1f5;transform:scaleX(0.9329);transform-origin:0 0;">AR-CONC</div>
<div class="t" style="left:355.0px;top:161.8px;font-size:15px;line-height:20px;height:20px;color:#eef1f5;transform:scaleX(0.9512);transform-origin:0 0;">Pattern</div>
<div class="a" style="left:579px;top:60px;width:1px;height:122px;background:#2a303c;"></div>
<div class="a" style="left:608px;top:65.3px;width:224.5px;height:27.3px;background:#4d586e;border:1px solid #2a303c"></div>
<svg style="left:820.2px;top:77px;" width="10" height="5" viewBox="0 0 10 5"><path d="M0 0H10L5 5Z" fill="#d8dbe0"/></svg>
<div class="a" style="left:608px;top:96.4px;width:224.5px;height:27.3px;background:#4d586e;border:1px solid #2a303c"></div>
<svg style="left:820.2px;top:108.1px;" width="10" height="5" viewBox="0 0 10 5"><path d="M0 0H10L5 5Z" fill="#d8dbe0"/></svg>
<div class="a" style="left:608px;top:127.3px;width:224.5px;height:27.3px;background:#4d586e;border:1px solid #2a303c"></div>
<svg style="left:820.2px;top:139px;" width="10" height="5" viewBox="0 0 10 5"><path d="M0 0H10L5 5Z" fill="#d8dbe0"/></svg>
<svg style="left:585px;top:69px;" width="20" height="20" viewBox="0 0 20 20"><rect x="3.5" y="3.5" width="13" height="13" fill="#3f6f9f"/><g stroke="#6db9f5" stroke-width="1.1"><path d="M3.5 9L9 3.5M3.5 13.5L13.5 3.5M5 16.5L16.5 5M9.5 16.5L16.5 9.5M14 16.5L16.5 14"/></g><path d="M2.6 0V20M17.4 0V20M0 2.6H20M0 17.4H20" stroke="#aeb1b6" stroke-width="1.3"/></svg>
<svg style="left:585px;top:100px;" width="18" height="17.5" viewBox="0 0 18 17.5"><clipPath id="hc5"><rect x="1.5" y="1.5" width="15" height="14.5"/></clipPath><g clip-path="url(#hc5)" stroke="#b4b8c0" stroke-width="1"><path d="M-17.5 17.5L0 0"/><path d="M-13.9 17.5L3.6 0"/><path d="M-10.3 17.5L7.2 0"/><path d="M-6.7 17.5L10.8 0"/><path d="M-3.1 17.5L14.4 0"/><path d="M0.5 17.5L18 0"/><path d="M4.1 17.5L21.6 0"/><path d="M7.7 17.5L25.2 0"/><path d="M11.3 17.5L28.8 0"/><path d="M14.9 17.5L32.4 0"/><path d="M18.5 17.5L36 0"/><path d="M22.1 17.5L39.6 0"/><path d="M25.7 17.5L43.2 0"/><path d="M29.3 17.5L46.8 0"/><path d="M32.9 17.5L50.4 0"/></g><rect x="0.7" y="0.7" width="16.6" height="16.1" fill="none" stroke="#9a9da3" stroke-width="1.4"/></svg>
<div class="a" style="left:594.5px;top:109.5px;width:11px;height:11px;background:#3b4453;"></div>
<div class="a" style="left:601px;top:110px;width:4.2px;height:4.2px;background:#f0b070;"></div>
<div class="a" style="left:595px;top:116px;width:4.2px;height:4.2px;background:#f0525a;"></div>
<div class="a" style="left:601px;top:116px;width:4.2px;height:4.2px;background:#6db9f5;"></div>
<div class="a" style="left:585px;top:131px;width:18px;height:17.5px;background:#9a9da3;"></div>
<div class="a" style="left:586.5px;top:132.3px;width:14.5px;height:14.5px;background:#6dbcfb;"></div>
<div class="a" style="left:594.5px;top:140.5px;width:11px;height:11px;background:#3b4453;"></div>
<div class="a" style="left:601px;top:141px;width:4.2px;height:4.2px;background:#f0b070;"></div>
<div class="a" style="left:595px;top:147px;width:4.2px;height:4.2px;background:#f0525a;"></div>
<div class="a" style="left:601px;top:147px;width:4.2px;height:4.2px;background:#6db9f5;"></div>
<div class="t" style="left:613.4px;top:69.8px;font-size:15px;line-height:20px;height:20px;color:#eef1f5;transform:scaleX(0.9429);transform-origin:0 0;">Pattern</div>
<div class="a" style="left:617px;top:100px;width:20px;height:20px;background:#ffffff;"></div>
<div class="t" style="left:642.5px;top:100.8px;font-size:15px;line-height:20px;height:20px;color:#eef1f5;transform:scaleX(0.9177);transform-origin:0 0;">ByLayer</div>
<svg style="left:617px;top:131px;" width="20" height="20" viewBox="0 0 20 20"><rect x="0.7" y="0.7" width="18.6" height="18.6" fill="#414a5b" stroke="#d8d8d8" stroke-width="1.3"/><path d="M1 19L19 1" stroke="#d8d8d8" stroke-width="1.1"/></svg>
<div class="t" style="left:642.5px;top:131.8px;font-size:15px;line-height:20px;height:20px;color:#eef1f5;transform:scaleX(0.9900);transform-origin:0 0;">None</div>
<svg style="left:838px;top:69px;" width="19.5" height="18" viewBox="0 0 19.5 18"><path d="M0 18L6.5 11.6H19.3L12.8 18Z" fill="#e2e2e2"/><path d="M0 12.8L6.5 6.2H19.3L12.8 12.8Z" fill="#e2e2e2" stroke="#3b4453" stroke-width="0.9"/><path d="M0 7.2L6.5 0.3H19.3L12.8 7.2Z" fill="#7cc6ff" stroke="#3b4453" stroke-width="0.9"/></svg>
<svg style="left:865.05px;top:77px;" width="6.5" height="4" viewBox="0 0 6.5 4"><path d="M0 0H6.5L3.25 4Z" fill="#d8dbe0"/></svg>
<div class="a" style="left:878px;top:65.3px;width:217.5px;height:27.3px;background:#394152;border:1px solid #2a303c"></div>
<div class="a" style="left:880px;top:67px;width:6px;height:23.3px;background:#7485a8;"></div>
<div class="a" style="left:1031.5px;top:66.3px;width:63px;height:25.3px;background:#4d586e;"></div>
<div class="t" style="left:885.5px;top:68.8px;font-size:15px;line-height:20px;height:20px;color:#eef1f5;transform:scaleX(0.9536);transform-origin:0 0;">Hatch Transparency</div>
<div class="t" style="left:1058.8px;top:69.8px;font-size:15px;line-height:20px;height:20px;color:#eef1f5;">0</div>
<div class="a" style="left:834.3px;top:96.4px;width:261.2px;height:27.3px;background:#394152;border:1px solid #2a303c"></div>
<div class="a" style="left:836px;top:98px;width:6px;height:23.3px;background:#7485a8;"></div>
<div class="a" style="left:1031.5px;top:97.4px;width:63px;height:25.3px;background:#4d586e;"></div>
<div class="t" style="left:841.2px;top:99.8px;font-size:15px;line-height:20px;height:20px;color:#eef1f5;transform:scaleX(0.9905);transform-origin:0 0;">Angle</div>
<div class="t" style="left:1058.8px;top:100.8px;font-size:15px;line-height:20px;height:20px;color:#eef1f5;">0</div>
<svg style="left:836px;top:131px;" width="17.5" height="17.5" viewBox="0 0 17.5 17.5"><clipPath id="hc6"><rect x="1.5" y="1.5" width="14.5" height="14.5"/></clipPath><g clip-path="url(#hc6)" stroke="#c4c7cc" stroke-width="1.1"><path d="M-17.5 17.5L0 0"/><path d="M-13.1 17.5L4.4 0"/><path d="M-8.7 17.5L8.8 0"/><path d="M-4.3 17.5L13.2 0"/><path d="M0.1 17.5L17.6 0"/><path d="M4.5 17.5L22 0"/><path d="M8.9 17.5L26.4 0"/><path d="M13.3 17.5L30.8 0"/><path d="M17.7 17.5L35.2 0"/><path d="M22.1 17.5L39.6 0"/><path d="M26.5 17.5L44 0"/><path d="M30.9 17.5L48.4 0"/></g><rect x="0.65" y="0.65" width="16.2" height="16.2" fill="none" stroke="#b4b6ba" stroke-width="1.3"/></svg>
<div class="a" style="left:846px;top:141px;width:10px;height:10px;background:#6dbcfb;"></div>
<div class="a" style="left:846px;top:145.5px;width:5.5px;height:5.5px;background:#e6e6e6;"></div>
<div class="a" style="left:845.3px;top:144.8px;width:6.2px;height:0.8px;background:#3b4453;"></div>
<div class="a" style="left:851.5px;top:144.8px;width:0.8px;height:6.2px;background:#3b4453;"></div>
<div class="a" style="left:859.3px;top:127.3px;width:236.2px;height:27.3px;background:#4d586e;border:1px solid #2a303c"></div>
<div class="t" style="left:863.5px;top:131.8px;font-size:15px;line-height:20px;height:20px;color:#eef1f5;transform:scaleX(0.9191);transform-origin:0 0;">0.010</div>
<div class="a" style="left:1080px;top:129px;width:14px;height:24px;background:#2a303c;"></div>
<div class="a" style="left:1081px;top:130px;width:12px;height:10.5px;background:#4d586e;"></div>
<div class="a" style="left:1081px;top:141.7px;width:12px;height:10.5px;background:#4d586e;"></div>
<svg style="left:1083.75px;top:133.05px;" width="6.5" height="4.5" viewBox="0 0 6.5 4.5"><path d="M0 4.5H6.5L3.25 0Z" fill="#d0d3d8"/></svg>
<svg style="left:1083.75px;top:144.75px;" width="6.5" height="4.5" viewBox="0 0 6.5 4.5"><path d="M0 0H6.5L3.25 4.5Z" fill="#d0d3d8"/></svg>
<div class="t" style="left:797.5px;top:161.8px;font-size:15px;line-height:20px;height:20px;color:#eef1f5;transform:scaleX(0.9757);transform-origin:0 0;">Properties</div>
<svg style="left:871px;top:169.9px;" width="10" height="5" viewBox="0 0 10 5"><path d="M0 0H10L5 5Z" fill="#dcdcdc"/></svg>
<div class="a" style="left:1099px;top:60px;width:1px;height:122px;background:#2a303c;"></div>
<svg style="left:1115px;top:68px;" width="34" height="34" viewBox="0 0 34 34"><clipPath id="hc7"><rect x="2" y="2" width="30" height="30"/></clipPath><g clip-path="url(#hc7)" stroke="#aeb3bb" stroke-width="1.25"><path d="M-34 34L0 0"/><path d="M-27.6 34L6.4 0"/><path d="M-21.2 34L12.8 0"/><path d="M-14.8 34L19.2 0"/><path d="M-8.4 34L25.6 0"/><path d="M-2 34L32 0"/><path d="M4.4 34L38.4 0"/><path d="M10.8 34L44.8 0"/><path d="M17.2 34L51.2 0"/><path d="M23.6 34L57.6 0"/><path d="M30 34L64 0"/><path d="M36.4 34L70.4 0"/><path d="M42.8 34L76.8 0"/><path d="M49.2 34L83.2 0"/><path d="M55.6 34L89.6 0"/><path d="M62 34L96 0"/></g><rect x="0.65" y="0.65" width="32.7" height="32.7" fill="none" stroke="#d6d6d6" stroke-width="1.3"/></svg>
<svg style="left:1130.5px;top:77.5px;" width="11" height="11" viewBox="0 0 11 11"><path d="M4.4 0H6.6V4.4H11V6.6H6.6V11H4.4V6.6H0V4.4H4.4Z" fill="#6dbcfb"/></svg>
<svg style="left:1138px;top:86px;" width="14" height="22" viewBox="0 0 10.5 16.5"><path d="M0 0V13.5L3.2 10.6L5.6 16L8 15L5.6 9.8H10Z" fill="#f4f4f4" stroke="#2a303c" stroke-width="0.6"/></svg>
<div class="t" style="left:1123.8px;top:112.8px;font-size:15px;line-height:20px;height:20px;color:#eef1f5;transform:scaleX(0.9105);transform-origin:0 0;">Set</div>
<div class="t" style="left:1114.3px;top:132.8px;font-size:15px;line-height:20px;height:20px;color:#eef1f5;transform:scaleX(1.0147);transform-origin:0 0;">Origin</div>
<div class="t" style="left:1106.3px;top:161.8px;font-size:15px;line-height:20px;height:20px;color:#eef1f5;transform:scaleX(1.0247);transform-origin:0 0;">Origin</div>
<svg style="left:1154px;top:169.9px;" width="10" height="5" viewBox="0 0 10 5"><path d="M0 0H10L5 5Z" fill="#dcdcdc"/></svg>
<div class="a" style="left:1170px;top:60px;width:1px;height:122px;background:#2a303c;"></div>
<div class="a" style="left:1173px;top:64.6px;width:81.2px;height:89.4px;background:#485b7c;border:1.2px solid #5bb0f5"></div>
<svg style="left:1194px;top:73px;" width="35.2" height="35" viewBox="0 0 35.2 35"><clipPath id="hc8"><rect x="2" y="2" width="31.2" height="31"/></clipPath><g clip-path="url(#hc8)" stroke="#b4b9c2" stroke-width="1.25"><path d="M-35 35L0 0"/><path d="M-28.6 35L6.4 0"/><path d="M-22.2 35L12.8 0"/><path d="M-15.8 35L19.2 0"/><path d="M-9.4 35L25.6 0"/><path d="M-3 35L32 0"/><path d="M3.4 35L38.4 0"/><path d="M9.8 35L44.8 0"/><path d="M16.2 35L51.2 0"/><path d="M22.6 35L57.6 0"/><path d="M29 35L64 0"/><path d="M35.4 35L70.4 0"/><path d="M41.8 35L76.8 0"/><path d="M48.2 35L83.2 0"/><path d="M54.6 35L89.6 0"/><path d="M61 35L96 0"/><path d="M67.4 35L102.4 0"/></g><rect x="0.65" y="0.65" width="33.9" height="33.7" fill="none" stroke="#c8ccd2" stroke-width="1.3"/></svg>
<svg style="left:1214.4px;top:68px;" width="19.2" height="19.4" viewBox="0 0 19.2 19.4"><path d="M13.7 0L0 9.2L8.2 10.4L4.4 19.4L19.2 9.8L11.6 7.6Z" fill="#f6ca60"/></svg>
<div class="t" style="left:1177.5px;top:112.8px;font-size:15px;line-height:20px;height:20px;color:#eef1f5;transform:scaleX(0.9688);transform-origin:0 0;">Associative</div>
<svg style="left:1277px;top:68px;" width="35.6" height="39.8" viewBox="0 0 35.6 39.8"><path d="M17.8 0L24.5 16.8L23.6 17.8A3.5 3.5 0 0 0 24.8 24.5H27.4L35.4 39.8L21.7 34.3A3.91 3.91 0 1 0 14 34.3L0.2 39.8L8.3 24.5H10.8A3.5 3.5 0 0 0 12 17.8L11.2 16.8Z" fill="#dcdcdc"/></svg>
<div class="t" style="left:1259.4px;top:112.8px;font-size:15px;line-height:20px;height:20px;color:#eef1f5;transform:scaleX(1.0101);transform-origin:0 0;">Annotative</div>
<svg style="left:1370px;top:74px;" width="25" height="25.5" viewBox="0 0 25 25.5"><clipPath id="hc9"><rect x="2.2" y="2.2" width="20.6" height="21.1"/></clipPath><g clip-path="url(#hc9)" stroke="#d0d3d8" stroke-width="1"><path d="M-25.5 0L0 25.5"/><path d="M-20.3 0L5.2 25.5"/><path d="M-15.1 0L10.4 25.5"/><path d="M-9.9 0L15.6 25.5"/><path d="M-4.7 0L20.8 25.5"/><path d="M0.5 0L26 25.5"/><path d="M5.7 0L31.2 25.5"/><path d="M10.9 0L36.4 25.5"/><path d="M16.1 0L41.6 25.5"/><path d="M21.3 0L46.8 25.5"/><path d="M26.5 0L52 25.5"/><path d="M31.7 0L57.2 25.5"/><path d="M36.9 0L62.4 25.5"/><path d="M42.1 0L67.6 25.5"/><path d="M47.3 0L72.8 25.5"/></g><rect x="0.7" y="0.7" width="23.6" height="24.1" fill="none" stroke="#b9bcc2" stroke-width="1.4"/></svg>
<svg style="left:1362px;top:68px;" width="40" height="40" viewBox="0 0 40 40"><path d="M3.5 4V36.4H36" fill="none" stroke="#d4d4d4" stroke-width="1.2"/><path d="M0 6.8L3.5 0L7 6.8Z M33 32.6L40 36.4L33 40Z" fill="#dcdcdc"/><path d="M31.5 14.2L37 8.5L39.6 11L34 16.8Z" fill="#f4f4f4"/><path d="M32.2 16.3C27 16 22 19 18 27C23 28.5 29 27.5 31 24C32.5 21.5 32.4 18.5 32.2 16.3Z" fill="#dea767"/></svg>
<div class="t" style="left:1362.5px;top:113.8px;font-size:15px;line-height:20px;height:20px;color:#eef1f5;transform:scaleX(0.9915);transform-origin:0 0;">Match</div>
<div class="t" style="left:1349.6px;top:133.8px;font-size:15px;line-height:20px;height:20px;color:#eef1f5;transform:scaleX(0.9698);transform-origin:0 0;">Properties</div>
<svg style="left:1418.95px;top:133.05px;" width="5.5" height="3.5" viewBox="0 0 5.5 3.5"><path d="M0 0H5.5L2.75 3.5Z" fill="#dcdcdc"/></svg>
<svg style="left:1418px;top:168px;" width="6.5" height="6.5" viewBox="0 0 6.5 6.5"><path d="M0.5 0.5L5.5 5.5" stroke="#dcdcdc" stroke-width="1.2"/><path d="M6.5 1V6.5H1Z" fill="#dcdcdc"/></svg>
<div class="t" style="left:1257.0px;top:161.8px;font-size:15px;line-height:20px;height:20px;color:#eef1f5;transform:scaleX(1.0059);transform-origin:0 0;">Options</div>
<svg style="left:1317px;top:169.9px;" width="10" height="5" viewBox="0 0 10 5"><path d="M0 0H10L5 5Z" fill="#dcdcdc"/></svg>
<div class="a" style="left:1432px;top:60px;width:1px;height:122px;background:#2a303c;"></div>
<svg style="left:1467px;top:72px;" width="42" height="32" viewBox="0 0 42 32"><path d="M0.7 16.5L7.3 10.5L15.9 18.2L35 0L41 6.6L15.9 31.6Z" fill="#5fd585"/></svg>
<div class="t" style="left:1470.2px;top:112.8px;font-size:15px;line-height:20px;height:20px;color:#eef1f5;transform:scaleX(0.9257);transform-origin:0 0;">Close</div>
<div class="t" style="left:1438.7px;top:132.8px;font-size:15px;line-height:20px;height:20px;color:#eef1f5;transform:scaleX(0.9795);transform-origin:0 0;">Hatch Creation</div>
<div class="t" style="left:1470.2px;top:161.8px;font-size:15px;line-height:20px;height:20px;color:#eef1f5;transform:scaleX(0.9257);transform-origin:0 0;">Close</div>
<!-- s_doctabs -->
<div class="a" style="left:0px;top:185px;width:1918px;height:32px;background:#222933;"></div>
<svg style="left:0px;top:185px;" width="260" height="32" viewBox="0 0 260 32"><path d="M71 31.5L81 1H201L191 31.5Z" fill="#3b4453"/><path d="M11 28L20 4M242 28L251 4" stroke="#4a5262" stroke-width="1"/></svg>
<div class="t" style="left:30.0px;top:191.8px;font-size:15px;line-height:20px;height:20px;color:#e4e7ec;transform:scaleX(0.9786);transform-origin:0 0;">Start</div>
<div class="t" style="left:91.0px;top:191.8px;font-size:15px;line-height:20px;height:20px;color:#ffffff;font-weight:bold;transform:scaleX(1.0088);transform-origin:0 0;">Drawing1*</div>
<svg style="left:177px;top:196.5px;" width="10" height="10" viewBox="0 0 10 10"><path d="M1 1L9 9M9 1L1 9" stroke="#b9bdc5" stroke-width="2"/></svg>
<svg style="left:213px;top:194px;" width="15" height="15" viewBox="0 0 15 15"><path d="M7.5 0V15M0 7.5H15" stroke="#f0f0f0" stroke-width="2"/></svg>
<!-- s_layers -->
<div class="a" style="left:0px;top:222px;width:469px;height:849px;background:#3b4453;border-radius:3px 3px 0 0"></div>
<div class="a" style="left:0px;top:224px;width:468px;height:28.8px;background:#2e3543;border-radius:3px 3px 0 0"></div>
<svg style="left:8px;top:232px;" width="3" height="10" viewBox="0 0 3 10"><path d="M0.5 0V10M2.5 0V10" stroke="#a0a5ae" stroke-width="1" stroke-dasharray="1 1"/></svg>
<div class="t" style="left:18.0px;top:226.8px;font-size:15px;line-height:20px;height:20px;color:#f2f2f2;transform:scaleX(0.8746);transform-origin:0 0;">LAYER PROPERTIES MANAGER</div>
<div class="t" style="left:5.0px;top:263.8px;font-size:15px;line-height:20px;height:20px;color:#eef1f5;transform:scaleX(0.9577);transform-origin:0 0;">Current layer: 0</div>
<div class="a" style="left:312px;top:259px;width:156px;height:19.8px;background:#4b566b;"></div>
<div class="t" style="left:312.0px;top:259.8px;font-size:15px;line-height:20px;height:20px;color:#b4bac6;transform:scaleX(0.9681);transform-origin:0 0;">Search for layer</div>
<svg style="left:450px;top:260px;" width="16" height="17" viewBox="0 0 16 17"><circle cx="6.8" cy="6.8" r="5.6" fill="#6a7386" stroke="#e8e8e8" stroke-width="1.5"/><path d="M11 11L15 15.5" stroke="#c79a55" stroke-width="1.8" stroke-linecap="round"/></svg>
<svg style="left:2px;top:290.5px;" width="20.5" height="20" viewBox="0 0 20.5 20"><path d="M0 12.5V0.8H6.5L8 3H16.5V12.5Z" fill="#d2d2d2"/><path d="M0.8 4.2H16.5V12.5H0.8Z" fill="#dedede"/><path d="M10 9.5H20.5V11L16.6 14.5V19.5L14 18.3V14.5L10 11Z" fill="#c4c4c4" stroke="#3b4453" stroke-width="0.8"/></svg>
<svg style="left:29.6px;top:293px;" width="17.5" height="14.5" viewBox="0 0 17.5 14.5"><path d="M0 14.5V0H7L8.8 2.5H17.5V14.5Z" fill="#cfcfcf"/><path d="M0 4H17.5V14.5H0Z" fill="#dedede"/></svg>
<div class="a" style="left:56px;top:290px;width:1px;height:22px;background:#232934;"></div>
<svg style="left:64px;top:291px;" width="21" height="20" viewBox="0 0 21 20"><path d="M0 9L6 4H16L10.5 9Z" fill="#9a9da3"/><path d="M1.5 5.5L8 0H17.5L11 5.5Z" fill="#dcdcdc"/><rect x="9.5" y="6" width="10.5" height="13" fill="#f4f4f4"/><rect x="11.3" y="8" width="7" height="3.6" fill="#5fb5f5"/><path d="M11.5 15H18" stroke="#777" stroke-width="1.2"/><path d="M11 15L13.5 13.2V16.8Z" fill="#555"/></svg>
<svg style="left:126px;top:290.5px;" width="17" height="16" viewBox="0 0 17 15"><path d="M0 14 L5.5 8.5 H17 L11.5 14 Z" fill="#cfcfcf" stroke="#3b4453" stroke-width="0.7"/><path d="M0 10.5 L5.5 5 H17 L11.5 10.5 Z" fill="#cfcfcf" stroke="#3b4453" stroke-width="0.7"/><path d="M0 7 L5.5 0 H17 L11.5 7 Z" fill="#dcdcdc" stroke="#3b4453" stroke-width="0.7"/></svg>
<svg style="left:135px;top:300px;" width="11" height="11" viewBox="0 0 11 11"><path d="M5.5 0L6.8 3.3L9.6 1.4L8.3 4.4L11 5.5L8.3 6.6L9.6 9.6L6.8 7.7L5.5 11L4.2 7.7L1.4 9.6L2.7 6.6L0 5.5L2.7 4.4L1.4 1.4L4.2 3.3Z" fill="#f8c85a"/></svg>
<svg style="left:153.5px;top:290.5px;" width="17" height="16" viewBox="0 0 17 15"><path d="M0 14 L5.5 8.5 H17 L11.5 14 Z" fill="#cfcfcf" stroke="#3b4453" stroke-width="0.7"/><path d="M0 10.5 L5.5 5 H17 L11.5 10.5 Z" fill="#cfcfcf" stroke="#3b4453" stroke-width="0.7"/><path d="M0 7 L5.5 0 H17 L11.5 7 Z" fill="#dcdcdc" stroke="#3b4453" stroke-width="0.7"/></svg>
<svg style="left:163.5px;top:300.5px;" width="9.5" height="9.5" viewBox="0 0 9.5 9.5"><circle cx="4.75" cy="4.75" r="4" fill="#3b4453" stroke="#5cc8d8" stroke-width="1"/><path d="M4.75 0.5V9M0.5 4.75H9M1.8 1.8L7.7 7.7M7.7 1.8L1.8 7.7" stroke="#5cc8d8" stroke-width="0.8"/></svg>
<svg style="left:180px;top:290.5px;" width="17" height="16" viewBox="0 0 17 15"><path d="M0 14 L5.5 8.5 H17 L11.5 14 Z" fill="#cfcfcf" stroke="#3b4453" stroke-width="0.7"/><path d="M0 10.5 L5.5 5 H17 L11.5 10.5 Z" fill="#cfcfcf" stroke="#3b4453" stroke-width="0.7"/><path d="M0 7 L5.5 0 H17 L11.5 7 Z" fill="#dcdcdc" stroke="#3b4453" stroke-width="0.7"/></svg>
<svg style="left:191.5px;top:302.5px;" width="8" height="8" viewBox="0 0 8 8"><path d="M1 1L7 7M7 1L1 7" stroke="#f0525a" stroke-width="2"/></svg>
<svg style="left:207.5px;top:291px;" width="17" height="16" viewBox="0 0 17 15"><path d="M0 14 L5.5 8.5 H17 L11.5 14 Z" fill="#cfcfcf" stroke="#3b4453" stroke-width="0.7"/><path d="M0 10.5 L5.5 5 H17 L11.5 10.5 Z" fill="#cfcfcf" stroke="#3b4453" stroke-width="0.7"/><path d="M0 7 L5.5 0 H17 L11.5 7 Z" fill="#dcdcdc" stroke="#3b4453" stroke-width="0.7"/></svg>
<svg style="left:216.5px;top:301.5px;" width="10" height="8.5" viewBox="0 0 10 8.5"><path d="M0.8 4.2L3.8 7.2L9.2 0.8" fill="none" stroke="#5fd585" stroke-width="2"/></svg>
<svg style="left:378.5px;top:291.5px;" width="21" height="18.5" viewBox="0 0 21 18.5"><path d="M3 8.5A7.6 7.6 0 0 1 16.5 4.2" fill="none" stroke="#5fd585" stroke-width="2.6"/><path d="M20.5 1V9H12.5Z" fill="#5fd585"/><path d="M18 10A7.6 7.6 0 0 1 4.5 14.3" fill="none" stroke="#5fd585" stroke-width="2.6"/><path d="M0.5 17.5V9.5H8.5Z" fill="#5fd585"/></svg>
<svg style="left:407px;top:292.5px;" width="18" height="16" viewBox="0 0 18 16"><path d="M0.5 15.5L6 9H17.8L12 15.5Z" fill="#8a8e96"/><rect x="1.2" y="0.5" width="9.8" height="9.8" fill="#dcdcdc"/></svg>
<svg style="left:432.5px;top:290.5px;" width="21" height="21" viewBox="0 0 21 21"><path d="M8.87 0.43L12.13 0.43L12.22 3.30L14.37 4.19L16.47 2.23L18.77 4.53L16.81 6.63L17.70 8.77L20.57 8.87L20.57 12.13L17.70 12.22L16.81 14.37L18.77 16.47L16.47 18.77L14.37 16.81L12.23 17.70L12.13 20.57L8.87 20.57L8.78 17.70L6.63 16.81L4.53 18.77L2.23 16.47L4.19 14.37L3.30 12.23L0.43 12.13L0.43 8.87L3.30 8.78L4.19 6.63L2.23 4.53L4.53 2.23L6.63 4.19L8.77 3.30Z" fill="#dcdcdc"/><circle cx="10.5" cy="10.5" r="3.4" fill="#3b4453"/></svg>
<div class="a" style="left:0px;top:315.3px;width:117.5px;height:28.5px;background:#3a4251;border-top:1px solid #2a303c;border-bottom:1px solid #2a303c"></div>
<div class="t" style="left:6.5px;top:318.8px;font-size:15px;line-height:20px;height:20px;color:#eef1f5;transform:scaleX(0.9429);transform-origin:0 0;">Filters</div>
<svg style="left:96.5px;top:324px;" width="14.5" height="11.4" viewBox="0 0 15 14"><path d="M6.5 1L1.5 7L6.5 13M13.5 1L8.5 7L13.5 13" fill="none" stroke="#dcdcdc" stroke-width="3.5"/></svg>
<div class="a" style="left:117px;top:315.3px;width:1px;height:700px;background:#2a303c;"></div>
<svg style="left:8px;top:356px;" width="11.5" height="11" viewBox="0 0 11.5 11"><rect x="0.5" y="0.5" width="10.5" height="10" fill="#e6e6e6" stroke="#bdbdbd"/><path d="M2.5 5.7H9" stroke="#2a4a9a" stroke-width="1.2"/></svg>
<svg style="left:20px;top:360.5px;" width="8" height="1" viewBox="0 0 8 1"><path d="M0 0.5H8" stroke="#c0c4ca" stroke-width="1" stroke-dasharray="1 1"/></svg>
<svg style="left:29.6px;top:352.5px;" width="14" height="13" viewBox="0 0 17 15"><path d="M0 14 L5.5 8.5 H17 L11.5 14 Z" fill="#cfcfcf" stroke="#3b4453" stroke-width="0.7"/><path d="M0 10.5 L5.5 5 H17 L11.5 10.5 Z" fill="#cfcfcf" stroke="#3b4453" stroke-width="0.7"/><path d="M0 7 L5.5 0 H17 L11.5 7 Z" fill="#dcdcdc" stroke="#3b4453" stroke-width="0.7"/></svg>
<svg style="left:37px;top:359.5px;" width="8" height="7.5" viewBox="0 0 8 7.5"><path d="M0.8 3.8L3 6L7.2 0.8" fill="none" stroke="#5fd585" stroke-width="1.8"/></svg>
<div class="a" style="left:50px;top:349px;width:22px;height:22px;background:#6e83a8;"></div>
<div class="t" style="left:52.0px;top:350.8px;font-size:15px;line-height:20px;height:20px;color:#ffffff;transform:scaleX(0.9898);transform-origin:0 0;">All</div>
<svg style="left:37px;top:371px;" width="14" height="13" viewBox="0 0 14 13"><path d="M0.5 0V12.5H13" fill="none" stroke="#c0c4ca" stroke-width="1" stroke-dasharray="1 1"/></svg>
<svg style="left:53px;top:374.8px;" width="15.375" height="15" viewBox="0 0 20.5 20"><path d="M0 12.5V0.8H6.5L8 3H16.5V12.5Z" fill="#d2d2d2"/><path d="M0.8 4.2H16.5V12.5H0.8Z" fill="#dedede"/><path d="M10 9.5H20.5V11L16.6 14.5V19.5L14 18.3V14.5L10 11Z" fill="#c4c4c4" stroke="#3b4453" stroke-width="0.8"/></svg>
<div class="a" style="left:75px;top:370px;width:42px;height:24px;overflow:hidden"><div class="t" style="left:0.0px;top:2.8px;font-size:15px;line-height:20px;height:20px;color:#eef1f5;transform:scaleX(0.8853);transform-origin:0 0;">All Used Layers</div></div>
<div class="a" style="left:123px;top:315.3px;width:340.5px;height:28.5px;background:#434c5e;"></div>
<div class="a" style="left:145.4px;top:315.3px;width:1px;height:28.5px;background:#2a303c;"></div>
<div class="a" style="left:277.2px;top:315.3px;width:1px;height:28.5px;background:#2a303c;"></div>
<div class="a" style="left:300.6px;top:315.3px;width:1px;height:28.5px;background:#2a303c;"></div>
<div class="a" style="left:323.4px;top:315.3px;width:1px;height:28.5px;background:#2a303c;"></div>
<div class="a" style="left:383.5px;top:315.3px;width:1px;height:28.5px;background:#2a303c;"></div>
<div class="a" style="left:463px;top:315.3px;width:1px;height:28.5px;background:#2a303c;"></div>
<div class="a" style="left:252px;top:315.3px;width:3px;height:700px;background:#2a303c;"></div>
<div class="t" style="left:128.5px;top:319.8px;font-size:15px;line-height:20px;height:20px;color:#eef1f5;transform:scaleX(0.6887);transform-origin:0 0;">S...</div>
<div class="t" style="left:151.5px;top:319.8px;font-size:15px;line-height:20px;height:20px;color:#eef1f5;transform:scaleX(0.9747);transform-origin:0 0;">Name</div>
<div class="t" style="left:260.4px;top:319.8px;font-size:15px;line-height:20px;height:20px;color:#eef1f5;transform:scaleX(0.7749);transform-origin:0 0;">F...</div>
<div class="t" style="left:283.0px;top:319.8px;font-size:15px;line-height:20px;height:20px;color:#eef1f5;transform:scaleX(0.7196);transform-origin:0 0;">L...</div>
<div class="t" style="left:306.0px;top:319.8px;font-size:15px;line-height:20px;height:20px;color:#eef1f5;transform:scaleX(0.7777);transform-origin:0 0;">P...</div>
<div class="t" style="left:329.0px;top:319.8px;font-size:15px;line-height:20px;height:20px;color:#eef1f5;transform:scaleX(1.0043);transform-origin:0 0;">Color</div>
<div class="t" style="left:389.4px;top:319.8px;font-size:15px;line-height:20px;height:20px;color:#eef1f5;transform:scaleX(0.9769);transform-origin:0 0;">Linetype</div>
<svg style="left:242px;top:328px;" width="8" height="4" viewBox="0 0 8 4"><path d="M0 4H8L4 0Z" fill="#dcdcdc"/></svg>
<div class="a" style="left:123px;top:344px;width:129px;height:22.6px;background:#7186ab;"></div>
<div class="a" style="left:255px;top:344px;width:212px;height:22.6px;background:#7186ab;"></div>
<svg style="left:126.5px;top:348px;" width="14.5" height="12" viewBox="0 0 14.5 12"><path d="M1 6.5L5 10.2L13.5 1.2" fill="none" stroke="#5fd585" stroke-width="2.6"/></svg>
<div class="t" style="left:150.0px;top:344.8px;font-size:15px;line-height:20px;height:20px;color:#ffffff;">0</div>
<svg style="left:257.5px;top:346.4px;" width="16" height="16" viewBox="0 0 16 16"><circle cx="8" cy="8" r="4" fill="#f8c86a"/><g stroke="#f8c86a" stroke-width="0.9"><path d="M13.20 8.00L16.00 8.00"/><path d="M11.68 11.68L13.66 13.66"/><path d="M8.00 13.20L8.00 16.00"/><path d="M4.32 11.68L2.34 13.66"/><path d="M2.80 8.00L0.00 8.00"/><path d="M4.32 4.32L2.34 2.34"/><path d="M8.00 2.80L8.00 0.00"/><path d="M11.68 4.32L13.66 2.34"/></g></svg>
<svg style="left:281px;top:348px;" width="14" height="14" viewBox="0 0 14 14"><path d="M8.2 6V3.4A2.4 2.4 0 0 1 13 3.4V4.6" fill="none" stroke="#f6c560" stroke-width="1.5"/><rect x="0" y="6" width="10.5" height="8" fill="#f6c560"/><rect x="4.5" y="8.5" width="1.5" height="3" fill="#7186ab"/></svg>
<svg style="left:304px;top:347px;" width="15.5" height="15" viewBox="0 0 15.5 15"><rect x="3.5" y="0" width="8.5" height="5" fill="#f4f4f4"/><rect x="0" y="4.5" width="15.5" height="7" rx="0.8" fill="#dcdcdc"/><rect x="3" y="8.5" width="9.5" height="6.5" fill="#f4f4f4"/><rect x="4.2" y="10.5" width="7" height="3.5" fill="#69b9f2"/></svg>
<div class="a" style="left:327px;top:347.8px;width:15px;height:15px;background:#ffffff;"></div>
<div class="t" style="left:346.3px;top:345.8px;font-size:15px;line-height:20px;height:20px;color:#ffffff;transform:scaleX(0.9471);transform-origin:0 0;">wh...</div>
<div class="t" style="left:387.3px;top:345.8px;font-size:15px;line-height:20px;height:20px;color:#ffffff;">Continu...</div>
<div class="a" style="left:464.3px;top:355px;width:2.6px;height:1.3px;background:#ffffff;"></div>
<div class="a" style="left:0px;top:965px;width:117px;height:21px;background:#f0f0f0;"></div>
<div class="a" style="left:21.2px;top:973.9px;width:48.8px;height:3.2px;background:#858585;border-radius:1.6px"></div>
<div class="a" style="left:0px;top:987px;width:117.5px;height:27.5px;background:#3a4251;border-bottom:1px solid #2a303c"></div>
<div class="a" style="left:6px;top:993px;width:14px;height:14px;background:#fdfdfd;border-radius:2.5px;border:1px solid #bdbdbd"></div>
<div class="t" style="left:25.0px;top:989.8px;font-size:15px;line-height:20px;height:20px;color:#eef1f5;transform:scaleX(1.0759);transform-origin:0 0;">Invert fil</div>
<svg style="left:96.5px;top:995.8px;" width="14.5" height="11.4" viewBox="0 0 15 14"><path d="M6.5 1L1.5 7L6.5 13M13.5 1L8.5 7L13.5 13" fill="none" stroke="#dcdcdc" stroke-width="3.5"/></svg>
<div class="a" style="left:123px;top:994px;width:343.5px;height:20.5px;background:#f0f0f0;"></div>
<div class="a" style="left:144.2px;top:1002.8px;width:96.7px;height:3.3px;background:#858585;border-radius:1.6px"></div>
<div class="t" style="left:4.0px;top:1035.8px;font-size:15px;line-height:20px;height:20px;color:#eef1f5;">All: 1 layers displayed of 1 total layers</div>
<!-- s_draw -->
<div class="a" style="left:0px;top:216px;width:1918px;height:6px;background:#3b4453;"></div>
<div class="a" style="left:469px;top:222px;width:6px;height:849px;background:#3b4453;"></div>
<div class="a" style="left:469px;top:1066px;width:1449px;height:5px;background:#3b4453;"></div>
<div class="a" style="left:473px;top:220.8px;width:1445px;height:845.5px;background:#959595;border-radius:3px 0 0 0"></div>
<div class="a" style="left:474.6px;top:222.4px;width:1444px;height:843px;background:#505050;border-radius:3px 0 0 0"></div>
<div class="a" style="left:475.7px;top:223.7px;width:1443px;height:842.6px;background:#f2f2f6;border-radius:5px 0 0 0"></div>
<div class="a" style="left:477px;top:225.3px;width:1441px;height:839px;background:#2a2a2a;border-radius:4px 0 0 0"></div>
<div class="a" style="left:478px;top:226px;width:1440px;height:838.2px;background:#ffffff;border-radius:4px 0 0 0"></div>
<div class="a" style="left:478px;top:227px;width:1440px;height:837.2px;background:#b7d1ec;border-radius:3px 0 0 0;background:linear-gradient(#9db7d7 0px,#a3bedc 18px,#bad4ee 35px,#b7d1ec 36px)"></div>
<div class="a" style="left:478px;top:263px;width:8px;height:801.2px;background:#b7d1ec;"></div>
<div class="a" style="left:486px;top:263px;width:1432px;height:801.2px;background:#212830;"></div>
<svg style="left:489px;top:238px;" width="18" height="20" viewBox="0 0 18 20"><path d="M0 0H12.5L18 5.5V20H0Z" fill="#2f66a8"/><path d="M12.5 0L18 5.5H12.5Z" fill="#8fb0d8"/><path d="M0 11.2H6.5L18 17V20H0Z" fill="#f2b321"/><path d="M5.6 0V11M0 6.8H18" stroke="#b7d1ec" stroke-width="1.3"/><circle cx="5.6" cy="6.8" r="1.7" fill="#9dbbe0" stroke="#e8f0fa" stroke-width="0.9"/></svg>
<div class="t" style="left:512.0px;top:238.8px;font-size:15px;line-height:20px;height:20px;color:#111111;">Drawing1.dwg</div>
<div class="t" style="left:489.0px;top:268.8px;font-size:15px;line-height:20px;height:20px;color:#d4d8de;transform:scaleX(1.1993);transform-origin:0 0;">[−]</div>
<div class="t" style="left:511.7px;top:268.8px;font-size:15px;line-height:20px;height:20px;color:#d4d8de;transform:scaleX(0.9748);transform-origin:0 0;">[Top]</div>
<div class="t" style="left:545.7px;top:268.8px;font-size:15px;line-height:20px;height:20px;color:#d4d8de;transform:scaleX(0.9777);transform-origin:0 0;">[2D Wireframe]</div>
<svg style="left:0px;top:0px;" width="1918" height="1140" viewBox="0 0 1918 1140"><rect x="603.5" y="463.5" width="256.5" height="256" fill="none" stroke="#e6e6e6" stroke-width="1.1"/><rect x="751.5" y="501.5" width="68" height="101" fill="none" stroke="#e6e6e6" stroke-width="1.1"/><path d="M603.5 719.5V658M603.5 719.5H666" stroke="#f2f2f2" stroke-width="1.4" fill="none"/><rect x="598.5" y="714" width="11" height="11" fill="none" stroke="#f2f2f2" stroke-width="1.1"/><path d="M670.3 703.8L685 718.3M685 703.8L670.3 718.3" stroke="#f2f2f2" stroke-width="1.2"/><path d="M605.3 639L612.5 646.5L619.8 639M612.5 646.5V653" stroke="#f2f2f2" stroke-width="1.2" fill="none"/><rect x="1368.5" y="466.5" width="256.5" height="255.5" fill="none" stroke="#e6e6e6" stroke-width="1.1"/><path d="M1298.5 801V897M1250 849.5H1347" stroke="#c31bc3" stroke-width="1.1"/></svg>
<svg style="left:0;top:0" width="1918" height="1140" viewBox="0 0 1918 1140"><clipPath id="hclip"><rect x="988" y="465" width="255" height="255.7"/></clipPath><g clip-path="url(#hclip)"><path d="M1060.4 480.0L1055.2 485.2L1061.6 486.6ZM999.6 543.2L994.4 548.4L1000.8 549.8ZM1068.8 554.2L1063.6 559.4L1070.0 560.8ZM991.0 470.1L987.4 474.5L992.0 474.9ZM1066.3 467.3L1062.7 471.7L1067.3 472.1ZM1112.6 471.0L1109.0 475.4L1113.6 475.8ZM1028.6 512.1L1025.0 516.5L1029.6 516.9ZM1075.3 516.1L1071.7 520.5L1076.3 520.9ZM1037.5 561.0L1033.9 565.4L1038.5 565.8ZM1083.9 565.0L1080.3 569.4L1084.9 569.8ZM991.0 556.7L987.4 561.1L992.0 561.5ZM1019.4 464.0L1015.8 468.4L1020.4 468.8ZM1023.7 468.3L1029.5 466.8L1027.7 471.4ZM1062.9 494.6L1068.7 493.1L1066.9 497.7ZM1008.1 515.5L1013.9 514.0L1012.1 518.6ZM1101.7 520.7L1107.5 519.2L1105.7 523.8ZM1047.1 541.5L1052.9 540.0L1051.1 544.6ZM992.2 562.7L998.0 561.2L996.2 565.8ZM1086.0 567.6L1091.8 566.1L1090.0 570.7ZM1030.9 588.8L1036.7 587.3L1034.9 591.9ZM1129.6 490.7L1124.4 495.9L1130.8 497.3ZM1199.1 501.1L1193.9 506.3L1200.3 507.7ZM1138.3 564.8L1133.1 570.0L1139.5 571.4ZM1207.8 575.8L1202.6 581.0L1209.0 582.4ZM1159.5 475.0L1155.9 479.4L1160.5 479.8ZM1206.3 479.1L1202.7 483.5L1207.3 483.9ZM1121.8 520.0L1118.2 524.4L1122.8 524.8ZM1168.7 524.0L1165.1 528.4L1169.7 528.8ZM1215.4 528.1L1211.8 532.5L1216.4 532.9ZM1130.8 568.8L1127.2 573.2L1131.8 573.6ZM1177.4 572.9L1173.8 577.3L1178.4 577.7ZM1224.4 577.2L1220.8 581.6L1225.4 582.0ZM1117.5 473.3L1123.3 471.8L1121.5 476.4ZM1211.1 478.8L1216.9 477.3L1215.1 481.9ZM1156.3 499.6L1162.1 498.1L1160.3 502.7ZM1195.2 525.7L1201.0 524.2L1199.2 528.8ZM1140.4 546.9L1146.2 545.4L1144.4 550.0ZM1234.0 551.7L1239.8 550.2L1238.0 554.8ZM1179.5 572.9L1185.3 571.4L1183.5 576.0ZM1124.8 592.8L1130.6 591.3L1128.8 595.9ZM1008.0 617.2L1002.8 622.4L1009.2 623.8ZM1077.4 628.2L1072.2 633.4L1078.6 634.8ZM1016.7 691.7L1011.5 696.9L1017.9 698.3ZM1086.2 702.4L1081.0 707.6L1087.4 709.0ZM1000.0 605.6L996.4 610.0L1001.0 610.4ZM1046.6 610.0L1043.0 614.4L1047.6 614.8ZM1093.1 613.9L1089.5 618.3L1094.1 618.7ZM1008.9 654.2L1005.3 658.6L1009.9 659.0ZM1055.8 658.9L1052.2 663.3L1056.8 663.7ZM1102.2 662.9L1098.6 667.3L1103.2 667.7ZM1018.0 703.5L1014.4 707.9L1019.0 708.3ZM1064.9 707.7L1061.3 712.1L1065.9 712.5ZM1111.4 711.9L1107.8 716.3L1112.4 716.7ZM1070.1 614.6L1075.9 613.1L1074.1 617.7ZM1015.4 636.0L1021.2 634.5L1019.4 639.1ZM1108.9 641.2L1114.7 639.7L1112.9 644.3ZM1054.4 661.8L1060.2 660.3L1058.4 664.9ZM999.4 683.5L1005.2 682.0L1003.4 686.6ZM1093.0 688.4L1098.8 686.9L1097.0 691.5ZM1038.2 709.5L1044.0 708.0L1042.2 712.6ZM1147.0 638.9L1141.8 644.1L1148.2 645.5ZM1216.4 649.7L1211.2 654.9L1217.6 656.3ZM1155.6 712.8L1150.4 718.0L1156.8 719.4ZM1140.1 617.8L1136.5 622.2L1141.1 622.6ZM1186.6 621.8L1183.0 626.2L1187.6 626.6ZM1233.3 626.2L1229.7 630.6L1234.3 631.0ZM1149.1 666.4L1145.5 670.8L1150.1 671.2ZM1195.7 671.0L1192.1 675.4L1196.7 675.8ZM1242.3 675.1L1238.7 679.5L1243.3 679.9ZM1218.0 598.9L1223.8 597.4L1222.0 602.0ZM1163.2 620.0L1169.0 618.5L1167.2 623.1ZM1202.4 646.4L1208.2 644.9L1206.4 649.5ZM1147.7 667.2L1153.5 665.7L1151.7 670.3ZM1186.4 693.9L1192.2 692.4L1190.4 697.0ZM1131.7 714.7L1137.5 713.2L1135.7 717.8ZM1225.5 718.8L1231.3 717.3L1229.5 721.9Z" fill="none" stroke="#e4e4e4" stroke-width="1.05" stroke-linejoin="round"/><path d="M1103 608h1v1h-1zM1117 614h1v1h-1zM1036 595h1v1h-1zM1014 543h1v1h-1zM1013 670h1v1h-1zM1163 478h1v1h-1zM1236 709h1v1h-1zM1153 622h1v1h-1zM1122 482h1v1h-1zM1038 528h1v1h-1zM998 583h1v1h-1zM1100 678h1v1h-1zM1120 628h1v1h-1zM1115 633h1v1h-1zM1104 537h1v1h-1zM1239 717h1v1h-1zM1200 645h1v1h-1zM1069 525h1v1h-1zM1182 568h1v1h-1zM1202 564h1v1h-1zM1230 680h1v1h-1zM990 520h1v1h-1zM1218 585h1v1h-1zM1235 567h1v1h-1zM1185 535h1v1h-1zM1012 550h1v1h-1zM1231 657h1v1h-1zM1019 529h1v1h-1zM1015 482h1v1h-1zM1189 512h1v1h-1zM1130 579h1v1h-1zM1038 651h1v1h-1zM1023 629h1v1h-1zM1019 573h1v1h-1zM1043 535h1v1h-1zM1233 669h1v1h-1zM1066 689h1v1h-1zM1043 566h1v1h-1zM1204 628h1v1h-1zM1015 715h1v1h-1zM1183 550h1v1h-1zM1064 485h1v1h-1zM1013 613h1v1h-1zM1051 618h1v1h-1zM1083 581h1v1h-1zM1230 588h1v1h-1zM1134 684h1v1h-1zM1036 506h1v1h-1zM1217 672h1v1h-1zM1052 515h1v1h-1zM1175 703h1v1h-1zM1039 705h1v1h-1zM1211 618h1v1h-1zM1095 493h1v1h-1zM1000 709h1v1h-1zM1050 644h1v1h-1zM1054 674h1v1h-1zM1139 541h1v1h-1zM1007 524h1v1h-1zM1219 518h1v1h-1zM994 535h1v1h-1zM1101 482h1v1h-1zM1133 500h1v1h-1zM1081 691h1v1h-1zM1163 614h1v1h-1zM1025 476h1v1h-1zM994 695h1v1h-1zM1165 709h1v1h-1zM995 627h1v1h-1zM1111 650h1v1h-1zM1070 718h1v1h-1zM1009 604h1v1h-1zM1174 693h1v1h-1zM1174 644h1v1h-1zM1078 639h1v1h-1zM1215 686h1v1h-1zM1094 665h1v1h-1zM1206 611h1v1h-1zM1146 563h1v1h-1zM1010 627h1v1h-1zM1238 688h1v1h-1zM1172 564h1v1h-1zM1174 613h1v1h-1zM997 618h1v1h-1zM1110 525h1v1h-1zM1165 592h1v1h-1zM1144 698h1v1h-1zM1054 470h1v1h-1zM1065 637h1v1h-1zM1216 633h1v1h-1zM1040 575h1v1h-1zM1210 563h1v1h-1zM1136 546h1v1h-1zM1024 592h1v1h-1zM1199 680h1v1h-1zM1059 509h1v1h-1zM1146 591h1v1h-1zM1069 678h1v1h-1zM1236 581h1v1h-1zM1009 475h1v1h-1zM1067 666h1v1h-1zM995 501h1v1h-1zM1104 473h1v1h-1zM1147 579h1v1h-1zM1147 631h1v1h-1zM1192 708h1v1h-1zM1161 517h1v1h-1zM1109 512h1v1h-1zM1169 512h1v1h-1zM1058 554h1v1h-1zM1164 598h1v1h-1zM1144 657h1v1h-1zM1088 666h1v1h-1zM1217 489h1v1h-1zM1223 648h1v1h-1zM1022 581h1v1h-1zM1084 610h1v1h-1zM1210 667h1v1h-1zM1153 518h1v1h-1zM1170 672h1v1h-1zM1150 647h1v1h-1zM1043 693h1v1h-1zM1124 665h1v1h-1zM1070 695h1v1h-1zM1204 554h1v1h-1zM1011 578h1v1h-1zM1128 660h1v1h-1zM1192 483h1v1h-1zM1074 665h1v1h-1zM1025 504h1v1h-1zM1119 649h1v1h-1zM1227 489h1v1h-1zM1045 599h1v1h-1zM1063 650h1v1h-1zM1150 598h1v1h-1zM1068 563h1v1h-1zM1201 693h1v1h-1zM1042 681h1v1h-1zM1232 599h1v1h-1zM1133 517h1v1h-1zM1141 474h1v1h-1zM1163 484h1v1h-1zM1125 571h1v1h-1zM1229 699h1v1h-1zM1057 586h1v1h-1zM1109 547h1v1h-1zM1038 622h1v1h-1zM1221 499h1v1h-1zM1185 473h1v1h-1zM1162 548h1v1h-1zM1079 623h1v1h-1zM1016 650h1v1h-1zM1123 577h1v1h-1zM1122 507h1v1h-1zM1203 621h1v1h-1zM1204 525h1v1h-1zM1216 546h1v1h-1zM1045 718h1v1h-1zM1212 501h1v1h-1zM1050 649h1v1h-1zM1055 491h1v1h-1zM1198 573h1v1h-1zM1187 499h1v1h-1zM1091 639h1v1h-1zM1161 696h1v1h-1zM1232 496h1v1h-1zM1116 657h1v1h-1zM1037 485h1v1h-1zM1017 476h1v1h-1zM1036 518h1v1h-1zM1200 716h1v1h-1zM1222 491h1v1h-1zM1005 706h1v1h-1zM1106 659h1v1h-1zM1072 584h1v1h-1zM1165 679h1v1h-1zM1035 581h1v1h-1zM1147 569h1v1h-1zM1140 594h1v1h-1zM1055 696h1v1h-1zM1176 662h1v1h-1zM1164 660h1v1h-1zM1171 485h1v1h-1zM1048 704h1v1h-1zM1157 552h1v1h-1zM1155 610h1v1h-1zM1123 565h1v1h-1zM1240 628h1v1h-1zM1235 473h1v1h-1zM1054 568h1v1h-1zM1003 516h1v1h-1zM1084 492h1v1h-1zM1232 610h1v1h-1zM1001 700h1v1h-1zM1143 482h1v1h-1zM1226 573h1v1h-1zM1081 539h1v1h-1zM1051 478h1v1h-1zM1029 656h1v1h-1zM1087 692h1v1h-1zM1177 480h1v1h-1zM1237 704h1v1h-1zM1008 694h1v1h-1zM1097 587h1v1h-1zM1233 528h1v1h-1zM1121 702h1v1h-1zM1171 585h1v1h-1zM1141 496h1v1h-1zM1122 498h1v1h-1zM1101 635h1v1h-1zM1184 600h1v1h-1zM1174 527h1v1h-1zM1138 626h1v1h-1zM1178 515h1v1h-1zM1052 713h1v1h-1zM1000 482h1v1h-1zM1058 574h1v1h-1zM1012 637h1v1h-1zM1128 625h1v1h-1zM1083 587h1v1h-1zM1043 553h1v1h-1zM1176 677h1v1h-1zM1009 497h1v1h-1zM1192 624h1v1h-1zM1182 521h1v1h-1zM1096 532h1v1h-1zM1192 560h1v1h-1zM1071 605h1v1h-1zM1097 560h1v1h-1zM1014 687h1v1h-1zM1010 488h1v1h-1zM1131 589h1v1h-1zM1161 542h1v1h-1zM1184 486h1v1h-1zM1043 633h1v1h-1zM1061 503h1v1h-1zM1079 649h1v1h-1zM1220 703h1v1h-1zM1218 577h1v1h-1zM1191 543h1v1h-1zM1224 692h1v1h-1zM1052 558h1v1h-1zM1081 558h1v1h-1zM1039 609h1v1h-1zM1199 608h1v1h-1zM1034 657h1v1h-1zM1210 538h1v1h-1zM996 596h1v1h-1zM1126 609h1v1h-1zM1152 529h1v1h-1zM1045 659h1v1h-1zM1089 552h1v1h-1zM1232 636h1v1h-1zM1113 602h1v1h-1zM1219 570h1v1h-1zM1197 634h1v1h-1zM1203 669h1v1h-1zM1191 573h1v1h-1zM1095 504h1v1h-1zM1175 716h1v1h-1zM1084 509h1v1h-1zM1005 544h1v1h-1zM1184 512h1v1h-1zM1006 582h1v1h-1zM1136 695h1v1h-1zM999 494h1v1h-1zM1139 523h1v1h-1zM1036 538h1v1h-1zM1194 587h1v1h-1zM1055 690h1v1h-1zM1219 553h1v1h-1zM1127 707h1v1h-1zM1122 596h1v1h-1zM1059 716h1v1h-1zM1083 667h1v1h-1zM1070 532h1v1h-1zM1207 597h1v1h-1zM1149 716h1v1h-1zM1057 601h1v1h-1zM990 673h1v1h-1zM1011 535h1v1h-1zM1169 491h1v1h-1zM1110 585h1v1h-1zM1204 543h1v1h-1zM1197 519h1v1h-1zM1029 676h1v1h-1zM1068 545h1v1h-1zM1016 566h1v1h-1zM1105 710h1v1h-1zM993 716h1v1h-1zM1190 519h1v1h-1zM1084 602h1v1h-1zM1065 552h1v1h-1zM1173 550h1v1h-1zM1226 608h1v1h-1zM1197 490h1v1h-1zM1025 491h1v1h-1zM1159 645h1v1h-1zM1013 524h1v1h-1zM1029 498h1v1h-1zM1092 485h1v1h-1zM1182 673h1v1h-1zM1093 471h1v1h-1zM1117 665h1v1h-1zM1216 605h1v1h-1zM1078 593h1v1h-1zM1025 646h1v1h-1zM1147 517h1v1h-1zM1134 642h1v1h-1zM1021 711h1v1h-1zM1024 694h1v1h-1zM1130 533h1v1h-1zM1217 716h1v1h-1zM1194 618h1v1h-1zM1021 674h1v1h-1zM1050 611h1v1h-1zM1198 514h1v1h-1zM1155 544h1v1h-1zM1158 652h1v1h-1zM1085 616h1v1h-1zM1191 471h1v1h-1zM1026 564h1v1h-1zM1132 511h1v1h-1zM1120 533h1v1h-1zM1150 477h1v1h-1zM1230 618h1v1h-1zM1107 570h1v1h-1zM1180 656h1v1h-1zM1092 576h1v1h-1zM1098 694h1v1h-1zM1070 481h1v1h-1zM1178 543h1v1h-1zM1116 567h1v1h-1zM1003 641h1v1h-1zM1049 484h1v1h-1zM1218 710h1v1h-1zM1156 684h1v1h-1zM1021 602h1v1h-1zM1228 467h1v1h-1zM1067 592h1v1h-1zM1223 712h1v1h-1zM1064 699h1v1h-1zM1214 516h1v1h-1zM1210 717h1v1h-1zM1038 688h1v1h-1zM1168 501h1v1h-1zM1164 702h1v1h-1zM1156 665h1v1h-1zM1083 633h1v1h-1zM1222 634h1v1h-1zM1059 628h1v1h-1zM1100 600h1v1h-1zM1053 669h1v1h-1zM1179 529h1v1h-1zM1086 700h1v1h-1zM1115 512h1v1h-1zM1116 679h1v1h-1zM1228 511h1v1h-1zM1187 666h1v1h-1zM1049 590h1v1h-1zM1139 646h1v1h-1zM1099 578h1v1h-1zM1132 603h1v1h-1zM1188 527h1v1h-1zM1027 545h1v1h-1zM1056 615h1v1h-1zM1030 640h1v1h-1zM1198 664h1v1h-1zM1005 570h1v1h-1zM1081 521h1v1h-1zM1237 503h1v1h-1zM1000 527h1v1h-1zM1088 542h1v1h-1zM999 717h1v1h-1zM1128 528h1v1h-1zM1105 701h1v1h-1zM1081 552h1v1h-1zM1235 620h1v1h-1zM1000 568h1v1h-1zM1152 482h1v1h-1zM1212 583h1v1h-1zM1088 679h1v1h-1zM1044 584h1v1h-1zM1238 637h1v1h-1zM1206 518h1v1h-1zM1086 485h1v1h-1zM1163 558h1v1h-1zM1169 534h1v1h-1zM1224 557h1v1h-1zM1181 649h1v1h-1zM1217 472h1v1h-1zM1088 527h1v1h-1zM1000 505h1v1h-1zM1068 573h1v1h-1zM1171 634h1v1h-1zM1044 477h1v1h-1zM1131 670h1v1h-1zM1234 542h1v1h-1zM1044 640h1v1h-1zM1157 707h1v1h-1zM1148 490h1v1h-1zM1097 566h1v1h-1zM1005 563h1v1h-1zM1072 592h1v1h-1zM1091 586h1v1h-1zM1032 634h1v1h-1zM1075 573h1v1h-1zM1028 613h1v1h-1zM1165 606h1v1h-1zM1088 558h1v1h-1z" fill="#f6f6f6" shape-rendering="crispEdges"/></g><rect x="987.8" y="465" width="255.2" height="255.8" fill="none" stroke="#3a68d0" stroke-width="3.6" opacity="0.95"/><rect x="987.8" y="465" width="255.2" height="255.8" fill="none" stroke="#b4c9f8" stroke-width="1.25"/></svg>
<!-- s_cmd -->
<div class="a" style="left:476.3px;top:995.3px;width:29.5px;height:67.5px;background:#2c3342;"></div>
<svg style="left:480.3px;top:1001px;" width="21" height="6" viewBox="0 0 21 6"><rect x="0" y="0" width="1.8" height="1.8" fill="#e8e8e8"/><rect x="3.6" y="0" width="1.8" height="1.8" fill="#e8e8e8"/><rect x="7.2" y="0" width="1.8" height="1.8" fill="#e8e8e8"/><rect x="10.8" y="0" width="1.8" height="1.8" fill="#e8e8e8"/><rect x="14.4" y="0" width="1.8" height="1.8" fill="#e8e8e8"/><rect x="18" y="0" width="1.8" height="1.8" fill="#e8e8e8"/><rect x="0" y="3.8" width="1.8" height="1.8" fill="#e8e8e8"/><rect x="3.6" y="3.8" width="1.8" height="1.8" fill="#e8e8e8"/><rect x="7.2" y="3.8" width="1.8" height="1.8" fill="#e8e8e8"/><rect x="10.8" y="3.8" width="1.8" height="1.8" fill="#e8e8e8"/><rect x="14.4" y="3.8" width="1.8" height="1.8" fill="#e8e8e8"/><rect x="18" y="3.8" width="1.8" height="1.8" fill="#e8e8e8"/></svg>
<svg style="left:483px;top:1017px;" width="10.5" height="10.5" viewBox="0 0 10.5 10.5"><path d="M1 1L9.5 9.5M9.5 1L1 9.5" stroke="#dcdcdc" stroke-width="2"/></svg>
<svg style="left:480px;top:1043px;" width="19.5" height="17" viewBox="0 0 19.5 17"><path d="M1.2 16.2L11 6.2A4.6 4.6 0 0 1 16.3 0.8L13.4 3.7L15.6 5.9L18.5 3A4.6 4.6 0 0 1 13.2 8.4L3.4 17Z" fill="#cfcfcf"/></svg>
<div class="a" style="left:506px;top:996px;width:503px;height:19.2px;background:#c8c8c8;border-radius:3px 3px 0 0"></div>
<div class="a" style="left:506px;top:1015.2px;width:503px;height:1px;background:#3a3a3a;"></div>
<div class="a" style="left:506px;top:1016.2px;width:503px;height:45px;background:#ffffff;border-radius:0 0 3px 3px"></div>
<svg style="left:511px;top:1018.4px;" width="20" height="19.5" viewBox="0 0 20 19.5"><rect x="3.5" y="3.2" width="12.6" height="12.6" fill="#e2f1fd"/><g stroke="#8fcaf8" stroke-width="1.1"><path d="M3.5 8.5L9 3.2M3.5 13L13.5 3.2M5 15.8L16.1 5M9.5 15.8L16.1 9.5M13.5 15.8L16.1 13.5"/></g><path d="M2.8 0V19.5M16.8 0V19.5M0 2.5H20M0 16.5H20" stroke="#d4d4d4" stroke-width="0.9"/></svg>
<svg style="left:533.25px;top:1026.1px;" width="9.5" height="5" viewBox="0 0 9.5 5"><path d="M0 0H9.5L4.75 5Z" fill="#6a6a6a"/></svg>
<div class="a" style="left:817.8px;top:1017px;width:129px;height:21.8px;background:#d2d2d2;border-radius:4px"></div>
<div class="a" style="left:509.8px;top:1039.3px;width:39px;height:21.2px;background:#d2d2d2;border-radius:4px"></div>
<div class="a" style="left:554.2px;top:1039.3px;width:74.6px;height:21.2px;background:#d2d2d2;border-radius:4px"></div>
<div class="t" style="left:550.2px;top:1020.8px;font-size:15px;line-height:20px;height:20px;color:#000000;font-weight:bold;font-family:'Liberation Mono',monospace;transform:scaleX(0.9954);transform-origin:0 0;">HATCH</div>
<div class="t" style="left:602.5px;top:1020.8px;font-size:15px;line-height:20px;height:20px;color:#1e1e1e;font-family:'Liberation Mono',monospace;transform:scaleX(0.9929);transform-origin:0 0;">Pick internal point or [</div>
<div class="t" style="left:820.0px;top:1020.8px;font-size:15px;line-height:20px;height:20px;color:#0a1aff;font-family:'Liberation Mono',monospace;transform:scaleX(0.9887);transform-origin:0 0;">S</div>
<div class="t" style="left:828.9px;top:1020.8px;font-size:15px;line-height:20px;height:20px;color:#1e1e1e;font-family:'Liberation Mono',monospace;transform:scaleX(0.9827);transform-origin:0 0;">elect objects</div>
<div class="t" style="left:511.6px;top:1041.8px;font-size:15px;line-height:20px;height:20px;color:#0a1aff;font-family:'Liberation Mono',monospace;transform:scaleX(0.9776);transform-origin:0 0;">U</div>
<div class="t" style="left:520.4px;top:1041.8px;font-size:15px;line-height:20px;height:20px;color:#1e1e1e;font-family:'Liberation Mono',monospace;transform:scaleX(0.9702);transform-origin:0 0;">ndo</div>
<div class="t" style="left:556.0px;top:1041.8px;font-size:15px;line-height:20px;height:20px;color:#1e1e1e;font-family:'Liberation Mono',monospace;transform:scaleX(0.9832);transform-origin:0 0;">se</div>
<div class="t" style="left:573.7px;top:1041.8px;font-size:15px;line-height:20px;height:20px;color:#0a1aff;font-family:'Liberation Mono',monospace;transform:scaleX(0.9776);transform-origin:0 0;">T</div>
<div class="t" style="left:582.5px;top:1041.8px;font-size:15px;line-height:20px;height:20px;color:#1e1e1e;font-family:'Liberation Mono',monospace;transform:scaleX(0.9821);transform-origin:0 0;">tings</div>
<div class="t" style="left:631.0px;top:1041.8px;font-size:15px;line-height:20px;height:20px;color:#1e1e1e;font-family:'Liberation Mono',monospace;transform:scaleX(0.9443);transform-origin:0 0;">]:</div>
<svg style="left:993.25px;top:1037.5px;" width="9.5" height="5" viewBox="0 0 9.5 5"><path d="M0 5H9.5L4.75 0Z" fill="#5a5a5a"/></svg>
<!-- s_props -->
<div class="a" style="left:0px;top:519.4px;width:298px;height:399.3px;background:#2f3644;border-radius:5px;border:1.5px solid #262c37"></div>
<div class="a" style="left:29.7px;top:524px;width:265.3px;height:391px;background:#3b4453;border-radius:4px;border-top:1px solid #444d5d"></div>
<svg style="left:10.4px;top:527.4px;" width="11.2" height="11.2" viewBox="0 0 10 10"><path d="M1.2 1.2L8.8 8.8M8.8 1.2L1.2 8.8" stroke="#dcdcdc" stroke-width="2.4"/></svg>
<svg style="left:11px;top:551px;" width="10.5" height="12.5" viewBox="0 0 10.5 12.5"><path d="M1 0V12.5" stroke="#dcdcdc" stroke-width="2"/><path d="M10.5 0.8V11.7L3 6.25Z" fill="#dcdcdc"/></svg>
<svg style="left:9.5px;top:575px;" width="13" height="13" viewBox="0 0 13 13"><path d="M9.00 6.50L12.90 6.50" stroke="#dcdcdc" stroke-width="2.6"/><path d="M8.27 8.27L11.03 11.03" stroke="#dcdcdc" stroke-width="2.6"/><path d="M6.50 9.00L6.50 12.90" stroke="#dcdcdc" stroke-width="2.6"/><path d="M4.73 8.27L1.97 11.03" stroke="#dcdcdc" stroke-width="2.6"/><path d="M4.00 6.50L0.10 6.50" stroke="#dcdcdc" stroke-width="2.6"/><path d="M4.73 4.73L1.97 1.97" stroke="#dcdcdc" stroke-width="2.6"/><path d="M6.50 4.00L6.50 0.10" stroke="#dcdcdc" stroke-width="2.6"/><path d="M8.27 4.73L11.03 1.97" stroke="#dcdcdc" stroke-width="2.6"/><circle cx="6.5" cy="6.5" r="4.1" fill="#dcdcdc"/><circle cx="6.5" cy="6.5" r="1.9" fill="#2f3644"/></svg>
<div class="a" style="left:55.9px;top:540.8px;width:133.5px;height:27.4px;background:#4b566b;border:1px solid #2a303c"></div>
<div class="t" style="left:59.5px;top:544.8px;font-size:15px;line-height:20px;height:20px;color:#eef1f5;transform:scaleX(0.9953);transform-origin:0 0;">Hatch</div>
<svg style="left:175.75px;top:553.15px;" width="8.5" height="4.5" viewBox="0 0 8.5 4.5"><path d="M0 0H8.5L4.25 4.5Z" fill="#d8dbe0"/></svg>
<svg style="left:200px;top:544.7px;" width="20.5" height="20.5" viewBox="0 0 20.5 20.5"><rect x="0" y="3" width="10.5" height="10.5" fill="#5fb5f5"/><rect x="6" y="9" width="11" height="11.5" fill="#79c4fb" stroke="#3b4453" stroke-width="0.8"/><path d="M14.2 0H17V3.6H20.5V6.3H17V9.8H14.2V6.3H10.8V3.6H14.2Z" fill="#5fd585"/></svg>
<svg style="left:229px;top:544.7px;" width="20" height="20.5" viewBox="0 0 20 20.5"><rect x="1" y="1" width="14.5" height="11.5" fill="#5fd585" stroke="#3fae62" stroke-width="1" stroke-dasharray="1.6 1"/></svg>
<svg style="left:240.5px;top:552.5px;" width="9" height="14" viewBox="0 0 9 14"><path d="M0 0V11.5L2.8 9L4.8 13.6L6.8 12.7L4.8 8.3H8.6Z" fill="#f4f4f4" stroke="#2a303c" stroke-width="0.5"/></svg>
<svg style="left:258px;top:544.7px;" width="20.5" height="20.5" viewBox="0 0 20.5 20.5"><path d="M9.5 0L3 5.8L7 6.4L4.6 11L12 4.6L7.8 3.8Z" fill="#f6ca60"/><rect x="8.5" y="9" width="12" height="11.5" fill="#f4f4f4"/><path d="M10.5 12H11.8M13 12H18.5M10.5 14.8H11.8M13 14.8H18.5M10.5 17.6H11.8M13 17.6H18.5" stroke="#4a9be0" stroke-width="1.1"/></svg>
<svg style="left:258px;top:551.5px;" width="9" height="14" viewBox="0 0 9 14"><path d="M0 0V11.5L2.8 9L4.8 13.6L6.8 12.7L4.8 8.3H8.6Z" fill="#f4f4f4" stroke="#2a303c" stroke-width="0.5"/></svg>
<div class="a" style="left:38px;top:575px;width:5.5px;height:156.5px;background:#2b3240;border-radius:2.5px"></div>
<div class="a" style="left:54px;top:574px;width:223px;height:26.7px;background:#2d3340;"></div>
<div class="t" style="left:63.0px;top:577.8px;font-size:15px;line-height:20px;height:20px;color:#ffffff;font-weight:bold;transform:scaleX(0.9667);transform-origin:0 0;">General</div>
<svg style="left:257px;top:584.3px;" width="10" height="5" viewBox="0 0 10 5"><path d="M0 0H10L5 5Z" fill="#dcdcdc"/></svg>
<div class="a" style="left:54px;top:813.2px;width:223px;height:26.6px;background:#2d3340;"></div>
<div class="t" style="left:63.4px;top:816.8px;font-size:15px;line-height:20px;height:20px;color:#ffffff;font-weight:bold;transform:scaleX(1.0062);transform-origin:0 0;">Pattern</div>
<svg style="left:257px;top:823.1px;" width="10" height="5" viewBox="0 0 10 5"><path d="M0 0H10L5 5Z" fill="#dcdcdc"/></svg>
<div class="a" style="left:75.6px;top:600.7px;width:1px;height:207.8px;background:#2a303c;"></div>
<div class="a" style="left:162px;top:600.7px;width:1px;height:207.8px;background:#2a303c;"></div>
<div class="a" style="left:276px;top:600.7px;width:1px;height:207.8px;background:#2a303c;"></div>
<div class="a" style="left:75.6px;top:626.2px;width:201.4px;height:1px;background:#2a303c;"></div>
<div class="a" style="left:75.6px;top:652.2px;width:201.4px;height:1px;background:#2a303c;"></div>
<div class="a" style="left:75.6px;top:678.2px;width:201.4px;height:1px;background:#2a303c;"></div>
<div class="a" style="left:75.6px;top:704.2px;width:201.4px;height:1px;background:#2a303c;"></div>
<div class="a" style="left:75.6px;top:730.2px;width:201.4px;height:1px;background:#2a303c;"></div>
<div class="a" style="left:75.6px;top:756.2px;width:201.4px;height:1px;background:#2a303c;"></div>
<div class="a" style="left:75.6px;top:782.2px;width:201.4px;height:1px;background:#2a303c;"></div>
<div class="a" style="left:75.6px;top:808.2px;width:201.4px;height:1px;background:#2a303c;"></div>
<div class="a" style="left:75.6px;top:839.8px;width:1px;height:72.5px;background:#2a303c;"></div>
<div class="a" style="left:162px;top:839.8px;width:1px;height:72.5px;background:#2a303c;"></div>
<div class="a" style="left:276px;top:839.8px;width:1px;height:72.5px;background:#2a303c;"></div>
<div class="a" style="left:75.6px;top:865.3px;width:201.4px;height:1px;background:#2a303c;"></div>
<div class="a" style="left:75.6px;top:891.3px;width:201.4px;height:1px;background:#2a303c;"></div>
<div class="t" style="left:85.3px;top:603.8px;font-size:15px;line-height:20px;height:20px;color:#dfe3ea;transform:scaleX(1.0043);transform-origin:0 0;">Color</div>
<div class="t" style="left:85.3px;top:629.8px;font-size:15px;line-height:20px;height:20px;color:#dfe3ea;transform:scaleX(0.9328);transform-origin:0 0;">Layer</div>
<div class="t" style="left:85.3px;top:655.8px;font-size:15px;line-height:20px;height:20px;color:#dfe3ea;transform:scaleX(0.9875);transform-origin:0 0;">Linetype</div>
<div class="t" style="left:84.5px;top:681.8px;font-size:15px;line-height:20px;height:20px;color:#dfe3ea;transform:scaleX(0.9825);transform-origin:0 0;">Linetype...</div>
<div class="t" style="left:85.3px;top:707.8px;font-size:15px;line-height:20px;height:20px;color:#dfe3ea;transform:scaleX(0.9777);transform-origin:0 0;">Plot style</div>
<div class="t" style="left:85.3px;top:733.8px;font-size:15px;line-height:20px;height:20px;color:#dfe3ea;transform:scaleX(1.0179);transform-origin:0 0;">Lineweight</div>
<div class="t" style="left:84.5px;top:759.8px;font-size:15px;line-height:20px;height:20px;color:#dfe3ea;transform:scaleX(0.9488);transform-origin:0 0;">Transpar...</div>
<div class="t" style="left:85.3px;top:785.8px;font-size:15px;line-height:20px;height:20px;color:#dfe3ea;transform:scaleX(1.0237);transform-origin:0 0;">Hyperlink</div>
<div class="a" style="left:166px;top:604.2px;width:18.3px;height:18px;background:#ffffff;"></div>
<div class="t" style="left:191.7px;top:603.8px;font-size:15px;line-height:20px;height:20px;color:#eef1f5;transform:scaleX(0.9232);transform-origin:0 0;">ByLayer</div>
<div class="t" style="left:166.2px;top:629.8px;font-size:15px;line-height:20px;height:20px;color:#eef1f5;">0</div>
<div class="a" style="left:166.5px;top:665.8px;width:50px;height:1.2px;background:#e8e8e8;"></div>
<div class="t" style="left:222.0px;top:655.8px;font-size:15px;line-height:20px;height:20px;color:#eef1f5;transform:scaleX(0.9326);transform-origin:0 0;">ByLay...</div>
<div class="t" style="left:166.2px;top:681.8px;font-size:15px;line-height:20px;height:20px;color:#eef1f5;transform:scaleX(0.9191);transform-origin:0 0;">1.000</div>
<div class="t" style="left:166.2px;top:707.8px;font-size:15px;line-height:20px;height:20px;color:#8f98a8;transform:scaleX(0.9747);transform-origin:0 0;">ByColor</div>
<div class="a" style="left:166.5px;top:743.3px;width:50px;height:1.2px;background:#e8e8e8;"></div>
<div class="t" style="left:222.0px;top:733.8px;font-size:15px;line-height:20px;height:20px;color:#eef1f5;transform:scaleX(0.9326);transform-origin:0 0;">ByLay...</div>
<div class="t" style="left:166.2px;top:759.8px;font-size:15px;line-height:20px;height:20px;color:#eef1f5;transform:scaleX(0.9232);transform-origin:0 0;">ByLayer</div>
<div class="t" style="left:85.3px;top:842.8px;font-size:15px;line-height:20px;height:20px;color:#dfe3ea;transform:scaleX(0.9625);transform-origin:0 0;">Type</div>
<div class="t" style="left:166.2px;top:842.8px;font-size:15px;line-height:20px;height:20px;color:#eef1f5;transform:scaleX(0.9827);transform-origin:0 0;">Predefined</div>
<div class="t" style="left:84.5px;top:868.8px;font-size:15px;line-height:20px;height:20px;color:#dfe3ea;transform:scaleX(0.9286);transform-origin:0 0;">Pattern  n...</div>
<div class="t" style="left:166.2px;top:868.8px;font-size:15px;line-height:20px;height:20px;color:#eef1f5;transform:scaleX(0.9257);transform-origin:0 0;">AR-CONC</div>
<div class="t" style="left:85.3px;top:894.8px;font-size:15px;line-height:20px;height:20px;color:#dfe3ea;transform:scaleX(1.0369);transform-origin:0 0;">Annotative</div>
<div class="t" style="left:166.2px;top:894.8px;font-size:15px;line-height:20px;height:20px;color:#eef1f5;">No</div>
<div class="t" style="left:7.6px;top:883px;font-size:16px;line-height:16px;height:16px;color:#c8ccd4;transform-origin:0 0;transform:rotate(-90deg) scaleX(0.775)">PROPERTIES</div>
<svg style="left:8px;top:896px;" width="15.5" height="20" viewBox="0 0 15.5 20"><rect x="0" y="0" width="15.5" height="20" fill="#d6d6d6"/><rect x="1.8" y="1.8" width="12" height="8.3" fill="#7cc6ff"/><path d="M2 13.2H13.5M2 16.6H13.5" stroke="#8a8a8a" stroke-width="1"/><rect x="4" y="12" width="1.6" height="2.4" fill="#777"/><rect x="9.5" y="15.4" width="1.6" height="2.4" fill="#777"/></svg>
<!-- s_bottom -->
<div class="a" style="left:0px;top:1071px;width:1918px;height:37px;background:#222933;"></div>
<svg style="left:0px;top:1070.5px;" width="260" height="32" viewBox="0 0 260 32"><path d="M9.5 30L21 0.5H95L83 30Z" fill="#3b4453"/><path d="M131 26L139 6M181 26L189 6" stroke="#4a5262" stroke-width="1"/></svg>
<div class="t" style="left:30.0px;top:1076.8px;font-size:15px;line-height:20px;height:20px;color:#ffffff;font-weight:bold;transform:scaleX(1.0224);transform-origin:0 0;">Model</div>
<div class="t" style="left:104.0px;top:1076.8px;font-size:15px;line-height:20px;height:20px;color:#e4e7ec;transform:scaleX(0.9350);transform-origin:0 0;">a3</div>
<svg style="left:152px;top:1078.5px;" width="15" height="15" viewBox="0 0 15 15"><path d="M7.5 0V15M0 7.5H15" stroke="#f0f0f0" stroke-width="2"/></svg>
<div class="a" style="left:1px;top:1108px;width:1169px;height:29.7px;background:#3b4453;"></div>
<div class="a" style="left:1175px;top:1108px;width:59px;height:29.7px;background:#3b4453;"></div>
<div class="a" style="left:1237px;top:1108px;width:80px;height:29.7px;background:#3b4453;"></div>
<div class="a" style="left:1320px;top:1108px;width:29.7px;height:29.7px;background:#3b4453;"></div>
<div class="a" style="left:1351px;top:1108px;width:129.8px;height:29.7px;background:#3b4453;"></div>
<div class="a" style="left:1482px;top:1108px;width:79.8px;height:29.7px;background:#3b4453;"></div>
<div class="a" style="left:1565.7px;top:1108px;width:131.1px;height:29.7px;background:#3b4453;"></div>
<div class="a" style="left:1700px;top:1108px;width:50px;height:29.7px;background:#3b4453;"></div>
<div class="a" style="left:1751px;top:1108px;width:29.8px;height:29.7px;background:#3b4453;"></div>
<div class="a" style="left:1784px;top:1108px;width:30.6px;height:29.7px;background:#3b4453;"></div>
<div class="a" style="left:1817.8px;top:1108px;width:38px;height:29.7px;background:#3b4453;"></div>
<div class="a" style="left:1859px;top:1108px;width:59px;height:29.7px;background:#3b4453;"></div>
<div class="a" style="left:1565.7px;top:1108px;width:28.3px;height:29.7px;background:#5b8dd0;"></div>
<div class="t" style="left:1179.8px;top:1113.1px;font-size:15.5px;line-height:21px;height:21px;color:#f4f4f4;transform:scaleX(0.9162);transform-origin:0 0;">MODEL</div>
<svg style="left:1242px;top:1113px;" width="20" height="20" viewBox="0 0 20 20"><path d="M4.5 0V19M9.5 0V19M15.5 0V19M0 4.5H20M0 9.5H20M0 14.5H20" stroke="#dcdcdc" stroke-width="1.3"/></svg>
<svg style="left:1273.5px;top:1115px;" width="16" height="16" viewBox="0 0 16 16"><rect x="0" y="0" width="3" height="3" fill="#dcdcdc"/><rect x="6.2" y="0" width="3" height="3" fill="#dcdcdc"/><rect x="12.4" y="0" width="3" height="3" fill="#dcdcdc"/><rect x="0" y="6.2" width="3" height="3" fill="#dcdcdc"/><rect x="6.2" y="6.2" width="3" height="3" fill="#dcdcdc"/><rect x="12.4" y="6.2" width="3" height="3" fill="#dcdcdc"/><rect x="0" y="12.4" width="3" height="3" fill="#dcdcdc"/><rect x="6.2" y="12.4" width="3" height="3" fill="#dcdcdc"/><rect x="12.4" y="12.4" width="3" height="3" fill="#dcdcdc"/></svg>
<svg style="left:1302.25px;top:1120px;" width="9.5" height="5" viewBox="0 0 9.5 5"><path d="M0 0H9.5L4.75 5Z" fill="#dcdcdc"/></svg>
<svg style="left:1325.5px;top:1114.5px;" width="20" height="17" viewBox="0 0 20 17"><path d="M4.5 0V9M0 4.5H9" stroke="#dcdcdc" stroke-width="1.3"/><rect x="7" y="10.5" width="12.5" height="5" fill="#dcdcdc"/><rect x="8.2" y="11.7" width="1.6" height="2.6" fill="#3b4453"/></svg>
<svg style="left:1356px;top:1113px;" width="20" height="20" viewBox="0 0 20 20"><path d="M0.8 0V19.2H20" fill="none" stroke="#dcdcdc" stroke-width="1.4"/><path d="M0.8 13.5H6.5V19.2" fill="none" stroke="#dcdcdc" stroke-width="1.1"/></svg>
<svg style="left:1386px;top:1113.5px;" width="21" height="18" viewBox="0 0 21 18"><circle cx="8.5" cy="9.5" r="7.8" fill="none" stroke="#dcdcdc" stroke-width="1.3"/><path d="M8.5 9.5H20.5M8.5 9.5L17 0.8" stroke="#dcdcdc" stroke-width="1.2"/></svg>
<svg style="left:1416.25px;top:1120px;" width="9.5" height="5" viewBox="0 0 9.5 5"><path d="M0 0H9.5L4.75 5Z" fill="#dcdcdc"/></svg>
<svg style="left:1437px;top:1113px;" width="18" height="19" viewBox="0 0 18 19"><path d="M1 1L16 18" stroke="#e0444c" stroke-width="1.3"/><path d="M9 0V19" stroke="#5fd585" stroke-width="1.3"/><rect x="7.2" y="7.5" width="3.6" height="3.6" fill="#3b4453" stroke="#f0f0f0" stroke-width="0.9"/></svg>
<svg style="left:1466.25px;top:1120px;" width="9.5" height="5" viewBox="0 0 9.5 5"><path d="M0 0H9.5L4.75 5Z" fill="#dcdcdc"/></svg>
<svg style="left:1487px;top:1114.5px;" width="21" height="16" viewBox="0 0 21 16"><path d="M0.5 15H20.5" stroke="#dcdcdc" stroke-width="1.5"/><path d="M0.5 15L15 0.5" stroke="#dcdcdc" stroke-width="1.2"/><rect x="6" y="6.8" width="3.2" height="3.2" fill="#dcdcdc"/></svg>
<svg style="left:1517px;top:1112.5px;" width="21" height="21" viewBox="0 0 21 21"><rect x="3.5" y="3" width="17" height="17" fill="none" stroke="#dcdcdc" stroke-width="1.3"/><rect x="0.7" y="0.7" width="5" height="5" fill="#3b4453" stroke="#f0a060" stroke-width="1.2"/></svg>
<svg style="left:1547.25px;top:1120px;" width="9.5" height="5" viewBox="0 0 9.5 5"><path d="M0 0H9.5L4.75 5Z" fill="#dcdcdc"/></svg>
<svg style="left:1570px;top:1113px;" width="17" height="19.5" viewBox="0 0 35.6 39.8"><path d="M17.8 0L24.5 16.8L23.6 17.8A3.5 3.5 0 0 0 24.8 24.5H27.4L35.4 39.8L21.7 34.3A3.91 3.91 0 1 0 14 34.3L0.2 39.8L8.3 24.5H10.8A3.5 3.5 0 0 0 12 17.8L11.2 16.8Z" fill="#ffffff"/></svg>
<svg style="left:1583px;top:1113.5px;" width="7.5" height="7.5" viewBox="0 0 7.5 7.5"><circle cx="3.75" cy="3.75" r="3" fill="none" stroke="#ffffff" stroke-width="1"/></svg>
<svg style="left:1600px;top:1113px;" width="17" height="19.5" viewBox="0 0 35.6 39.8"><path d="M17.8 0L24.5 16.8L23.6 17.8A3.5 3.5 0 0 0 24.8 24.5H27.4L35.4 39.8L21.7 34.3A3.91 3.91 0 1 0 14 34.3L0.2 39.8L8.3 24.5H10.8A3.5 3.5 0 0 0 12 17.8L11.2 16.8Z" fill="#cfcfcf"/></svg>
<svg style="left:1612px;top:1112.5px;" width="6.5" height="9.5" viewBox="0 0 6.5 9.5"><path d="M4.2 0L0 5H2.6L1.2 9.5L6.5 3.6H3.6Z" fill="#dcdcdc"/></svg>
<svg style="left:1630.5px;top:1113px;" width="17" height="19.5" viewBox="0 0 35.6 39.8"><path d="M17.8 0L24.5 16.8L23.6 17.8A3.5 3.5 0 0 0 24.8 24.5H27.4L35.4 39.8L21.7 34.3A3.91 3.91 0 1 0 14 34.3L0.2 39.8L8.3 24.5H10.8A3.5 3.5 0 0 0 12 17.8L11.2 16.8Z" fill="#cfcfcf"/></svg>
<div class="t" style="left:1661.0px;top:1113.1px;font-size:15.5px;line-height:21px;height:21px;color:#f4f4f4;transform:scaleX(0.7426);transform-origin:0 0;">1:1</div>
<svg style="left:1682.25px;top:1120px;" width="9.5" height="5" viewBox="0 0 9.5 5"><path d="M0 0H9.5L4.75 5Z" fill="#dcdcdc"/></svg>
<svg style="left:1704.5px;top:1112.5px;" width="21" height="21" viewBox="0 0 21 21"><path d="M8.87 0.43L12.13 0.43L12.22 3.30L14.37 4.19L16.47 2.23L18.77 4.53L16.81 6.63L17.70 8.77L20.57 8.87L20.57 12.13L17.70 12.22L16.81 14.37L18.77 16.47L16.47 18.77L14.37 16.81L12.23 17.70L12.13 20.57L8.87 20.57L8.78 17.70L6.63 16.81L4.53 18.77L2.23 16.47L4.19 14.37L3.30 12.23L0.43 12.13L0.43 8.87L3.30 8.78L4.19 6.63L2.23 4.53L4.53 2.23L6.63 4.19L8.77 3.30Z" fill="#dcdcdc"/><circle cx="10.5" cy="10.5" r="3.5" fill="#3b4453"/></svg>
<svg style="left:1735.25px;top:1120px;" width="9.5" height="5" viewBox="0 0 9.5 5"><path d="M0 0H9.5L4.75 5Z" fill="#dcdcdc"/></svg>
<svg style="left:1756px;top:1113px;" width="19" height="19" viewBox="0 0 19 19"><path d="M9.5 0V19M0 9.5H19" stroke="#f0f0f0" stroke-width="2.4"/></svg>
<svg style="left:1789px;top:1113px;" width="21" height="20" viewBox="0 0 21 20"><rect x="0.7" y="0.7" width="7" height="7" fill="none" stroke="#dcdcdc" stroke-width="1.1"/><circle cx="16" cy="8.5" r="4.2" fill="none" stroke="#dcdcdc" stroke-width="1.1"/><path d="M3.5 19L8 11.5L12.5 19Z" fill="none" stroke="#dcdcdc" stroke-width="1.1"/></svg>
<svg style="left:1826px;top:1113px;" width="21" height="20" viewBox="0 0 21 20"><rect x="0.5" y="0" width="19" height="15.5" fill="#d6d6d6"/><path d="M1.5 11C4 4 6 1.5 7 2C9 3 12 13 14 13C16 13 18 5 19 3" fill="none" stroke="#7a8596" stroke-width="1"/><circle cx="6.8" cy="2.8" r="1.4" fill="#5fb5f5"/><path d="M14.5 9L20.5 20H8.5Z" fill="#f4a35e"/><path d="M14.5 12.5V16.5M14.5 17.6V18.8" stroke="#fff" stroke-width="1.2"/></svg>
<svg style="left:1864px;top:1114.5px;" width="20" height="15" viewBox="0 0 20 15"><rect x="0.6" y="0.6" width="18.8" height="13.8" fill="none" stroke="#dcdcdc" stroke-width="1.2"/><path d="M11.5 6.5L16 3M3.5 11.5L8 8" stroke="#dcdcdc" stroke-width="1.1"/><path d="M13 2.5H16.5V6Z M3 8.5V12H6.5Z" fill="#dcdcdc"/></svg>
<svg style="left:1893.5px;top:1113.5px;" width="20" height="18" viewBox="0 0 20 18"><path d="M0 1.5H20M0 9H20M0 16.5H20" stroke="#f0f0f0" stroke-width="2.2"/></svg>
</body></html>
